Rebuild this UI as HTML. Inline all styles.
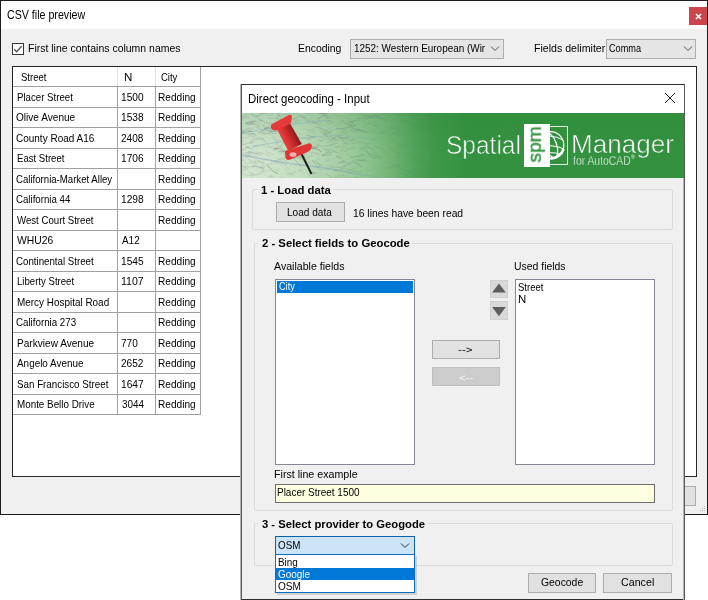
<!DOCTYPE html>
<html><head><meta charset="utf-8">
<style>
*{margin:0;padding:0;box-sizing:border-box}
html,body{width:708px;height:600px;overflow:hidden;background:#fff}
body{position:relative;font-family:"Liberation Sans",sans-serif;color:#000}
.a{position:absolute;white-space:pre;transform-origin:0 0}
.hl{position:absolute;height:1px;background:#a0a0a0}
.vl{position:absolute;width:1px;background:#a0a0a0}
.combo{position:absolute;background:#e5e5e5;border:1px solid #adadad}
.gb{position:absolute;border:1px solid #dcdcdc;border-radius:2px}
.btn{position:absolute;background:#e1e1e1;border:1px solid #adadad}
.lb{position:absolute;background:#fff;border:1px solid #828790}
</style></head><body>
<div class="a" style="left:0;top:0;width:708px;height:515px;border:1px solid #1c1c1c;background:#f0f0f0"></div>
<div class="a" style="left:1px;top:1px;width:706px;height:28px;background:#fff"></div>
<div class="a" style="left:7.27px;top:7.80px;font-size:12.46px;line-height:15px;transform:scaleX(0.855)">CSV file preview</div>
<div class="a" style="left:689px;top:7px;width:18px;height:18px;background:#cc444c"></div>
<svg class="a" style="left:689px;top:7px" width="18" height="18"><path d="M7 7L12 12M12 7L7 12" stroke="#fff" stroke-width="1.7"/></svg>
<div class="a" style="left:12px;top:43px;width:12px;height:12px;border:1px solid #333;background:#fff"></div>
<svg class="a" style="left:12px;top:43px" width="12" height="12"><path d="M2.3 6.3L4.6 8.7L9.6 3.3" fill="none" stroke="#555" stroke-width="1.3"/></svg>
<div class="a" style="left:27.86px;top:41.00px;font-size:11.30px;line-height:14px;transform:scaleX(0.927)">First line contains column names</div>
<div class="a" style="left:297.97px;top:41.00px;font-size:11.30px;line-height:14px;transform:scaleX(0.921)">Encoding</div>
<div class="combo" style="left:350px;top:39px;width:154px;height:20px"></div>
<div class="a" style="left:353.50px;top:41.00px;font-size:11.30px;line-height:14px;transform:scaleX(0.879)">1252: Western European (Wir</div>
<svg class="a" style="left:490px;top:45px" width="10" height="7"><path d="M1 1.5L5 5.5L9 1.5" fill="none" stroke="#555" stroke-width="1"/></svg>
<div class="a" style="left:533.65px;top:41.00px;font-size:11.30px;line-height:14px;transform:scaleX(0.938)">Fields delimiter</div>
<div class="combo" style="left:606px;top:39px;width:90px;height:20px"></div>
<div class="a" style="left:609.44px;top:41.00px;font-size:11.30px;line-height:14px;transform:scaleX(0.809)">Comma</div>
<svg class="a" style="left:683px;top:45px" width="10" height="7"><path d="M1 1.5L5 5.5L9 1.5" fill="none" stroke="#555" stroke-width="1"/></svg>
<div class="a" style="left:12px;top:66px;width:685px;height:411px;border:1px solid #262626;background:#fff"></div>
<div class="vl" style="left:117px;top:67px;height:20px;background:#e3e3e3"></div>
<div class="vl" style="left:155px;top:67px;height:20px;background:#e3e3e3"></div>
<div class="hl" style="left:13px;top:86px;width:188px"></div>
<div class="hl" style="left:13px;top:107px;width:188px"></div>
<div class="hl" style="left:13px;top:127px;width:188px"></div>
<div class="hl" style="left:13px;top:148px;width:188px"></div>
<div class="hl" style="left:13px;top:168px;width:188px"></div>
<div class="hl" style="left:13px;top:189px;width:188px"></div>
<div class="hl" style="left:13px;top:209px;width:188px"></div>
<div class="hl" style="left:13px;top:230px;width:188px"></div>
<div class="hl" style="left:13px;top:250px;width:188px"></div>
<div class="hl" style="left:13px;top:271px;width:188px"></div>
<div class="hl" style="left:13px;top:291px;width:188px"></div>
<div class="hl" style="left:13px;top:312px;width:188px"></div>
<div class="hl" style="left:13px;top:332px;width:188px"></div>
<div class="hl" style="left:13px;top:353px;width:188px"></div>
<div class="hl" style="left:13px;top:373px;width:188px"></div>
<div class="hl" style="left:13px;top:394px;width:188px"></div>
<div class="hl" style="left:13px;top:414px;width:188px"></div>
<div class="vl" style="left:117px;top:86px;height:329px"></div>
<div class="vl" style="left:155px;top:86px;height:329px"></div>
<div class="vl" style="left:200px;top:67px;height:348px"></div>
<div class="a" style="left:21.12px;top:69.80px;font-size:11.30px;line-height:14px;transform:scaleX(0.844)">Street</div>
<div class="a" style="left:124.37px;top:69.80px;font-size:11.30px;line-height:14px;transform:scaleX(1.024)">N</div>
<div class="a" style="left:161.12px;top:69.80px;font-size:11.30px;line-height:14px;transform:scaleX(0.841)">City</div>
<div class="a" style="left:16.63px;top:89.60px;font-size:11.30px;line-height:14px;transform:scaleX(0.856)">Placer Street</div>
<div class="a" style="left:121.09px;top:89.60px;font-size:11.30px;line-height:14px;transform:scaleX(0.898)">1500</div>
<div class="a" style="left:157.89px;top:89.60px;font-size:11.30px;line-height:14px;transform:scaleX(0.895)">Redding</div>
<div class="a" style="left:16.30px;top:110.10px;font-size:11.30px;line-height:14px;transform:scaleX(0.892)">Olive Avenue</div>
<div class="a" style="left:121.09px;top:110.10px;font-size:11.30px;line-height:14px;transform:scaleX(0.898)">1538</div>
<div class="a" style="left:157.89px;top:110.10px;font-size:11.30px;line-height:14px;transform:scaleX(0.895)">Redding</div>
<div class="a" style="left:16.20px;top:130.60px;font-size:11.30px;line-height:14px;transform:scaleX(0.884)">County Road A16</div>
<div class="a" style="left:121.30px;top:130.60px;font-size:11.30px;line-height:14px;transform:scaleX(0.889)">2408</div>
<div class="a" style="left:157.89px;top:130.60px;font-size:11.30px;line-height:14px;transform:scaleX(0.895)">Redding</div>
<div class="a" style="left:16.63px;top:151.10px;font-size:11.30px;line-height:14px;transform:scaleX(0.848)">East Street</div>
<div class="a" style="left:121.09px;top:151.10px;font-size:11.30px;line-height:14px;transform:scaleX(0.898)">1706</div>
<div class="a" style="left:157.89px;top:151.10px;font-size:11.30px;line-height:14px;transform:scaleX(0.895)">Redding</div>
<div class="a" style="left:16.22px;top:171.60px;font-size:11.30px;line-height:14px;transform:scaleX(0.851)">California-Market Alley</div>
<div class="a" style="left:157.89px;top:171.60px;font-size:11.30px;line-height:14px;transform:scaleX(0.895)">Redding</div>
<div class="a" style="left:16.22px;top:192.10px;font-size:11.30px;line-height:14px;transform:scaleX(0.856)">California 44</div>
<div class="a" style="left:121.09px;top:192.10px;font-size:11.30px;line-height:14px;transform:scaleX(0.898)">1298</div>
<div class="a" style="left:157.89px;top:192.10px;font-size:11.30px;line-height:14px;transform:scaleX(0.895)">Redding</div>
<div class="a" style="left:17.40px;top:212.60px;font-size:11.30px;line-height:14px;transform:scaleX(0.854)">West Court Street</div>
<div class="a" style="left:157.89px;top:212.60px;font-size:11.30px;line-height:14px;transform:scaleX(0.895)">Redding</div>
<div class="a" style="left:17.40px;top:233.10px;font-size:11.30px;line-height:14px;transform:scaleX(0.914)">WHU26</div>
<div class="a" style="left:121.80px;top:233.10px;font-size:11.30px;line-height:14px;transform:scaleX(0.878)">A12</div>
<div class="a" style="left:16.21px;top:253.60px;font-size:11.30px;line-height:14px;transform:scaleX(0.859)">Continental Street</div>
<div class="a" style="left:121.09px;top:253.60px;font-size:11.30px;line-height:14px;transform:scaleX(0.898)">1545</div>
<div class="a" style="left:157.89px;top:253.60px;font-size:11.30px;line-height:14px;transform:scaleX(0.895)">Redding</div>
<div class="a" style="left:16.63px;top:274.10px;font-size:11.30px;line-height:14px;transform:scaleX(0.850)">Liberty Street</div>
<div class="a" style="left:121.06px;top:274.10px;font-size:11.30px;line-height:14px;transform:scaleX(0.935)">1107</div>
<div class="a" style="left:157.89px;top:274.10px;font-size:11.30px;line-height:14px;transform:scaleX(0.895)">Redding</div>
<div class="a" style="left:16.60px;top:294.60px;font-size:11.30px;line-height:14px;transform:scaleX(0.879)">Mercy Hospital Road</div>
<div class="a" style="left:157.89px;top:294.60px;font-size:11.30px;line-height:14px;transform:scaleX(0.895)">Redding</div>
<div class="a" style="left:16.21px;top:315.10px;font-size:11.30px;line-height:14px;transform:scaleX(0.862)">California 273</div>
<div class="a" style="left:157.89px;top:315.10px;font-size:11.30px;line-height:14px;transform:scaleX(0.895)">Redding</div>
<div class="a" style="left:16.59px;top:335.60px;font-size:11.30px;line-height:14px;transform:scaleX(0.893)">Parkview Avenue</div>
<div class="a" style="left:121.30px;top:335.60px;font-size:11.30px;line-height:14px;transform:scaleX(0.889)">770</div>
<div class="a" style="left:157.89px;top:335.60px;font-size:11.30px;line-height:14px;transform:scaleX(0.895)">Redding</div>
<div class="a" style="left:17.00px;top:356.10px;font-size:11.30px;line-height:14px;transform:scaleX(0.878)">Angelo Avenue</div>
<div class="a" style="left:121.29px;top:356.10px;font-size:11.30px;line-height:14px;transform:scaleX(0.894)">2652</div>
<div class="a" style="left:157.89px;top:356.10px;font-size:11.30px;line-height:14px;transform:scaleX(0.895)">Redding</div>
<div class="a" style="left:16.61px;top:376.60px;font-size:11.30px;line-height:14px;transform:scaleX(0.866)">San Francisco Street</div>
<div class="a" style="left:121.09px;top:376.60px;font-size:11.30px;line-height:14px;transform:scaleX(0.902)">1647</div>
<div class="a" style="left:157.89px;top:376.60px;font-size:11.30px;line-height:14px;transform:scaleX(0.895)">Redding</div>
<div class="a" style="left:16.61px;top:397.10px;font-size:11.30px;line-height:14px;transform:scaleX(0.871)">Monte Bello Drive</div>
<div class="a" style="left:121.50px;top:397.10px;font-size:11.30px;line-height:14px;transform:scaleX(0.877)">3044</div>
<div class="a" style="left:157.89px;top:397.10px;font-size:11.30px;line-height:14px;transform:scaleX(0.895)">Redding</div>
<div class="btn" style="left:660px;top:486px;width:36px;height:20px"></div>
<div class="a" style="left:704px;top:506px;width:1px;height:1px;background:#b8b8b8"></div>
<div class="a" style="left:702px;top:508px;width:1px;height:1px;background:#b8b8b8"></div>
<div class="a" style="left:704px;top:508px;width:1px;height:1px;background:#b8b8b8"></div>
<div class="a" style="left:700px;top:510px;width:1px;height:1px;background:#b8b8b8"></div>
<div class="a" style="left:702px;top:510px;width:1px;height:1px;background:#b8b8b8"></div>
<div class="a" style="left:704px;top:510px;width:1px;height:1px;background:#b8b8b8"></div>
<div class="a" style="left:241px;top:84px;width:444px;height:516px;border:1px solid #2e2e2e;border-left-color:#5a5a5a;border-right-color:#5a5a5a;background:#f0f0f0;box-shadow:-1px 0 0 #b4b4b4, 0 0 0 0 #000"></div>
<div class="a" style="left:683px;top:85px;width:1px;height:515px;background:#b4b4b4"></div>
<div class="a" style="left:242px;top:85px;width:442px;height:28px;background:#fff"></div>
<div class="a" style="left:248.28px;top:92.10px;font-size:12.17px;line-height:15px;transform:scaleX(0.942)">Direct geocoding - Input</div>
<svg class="a" style="left:664px;top:92px" width="12" height="12"><path d="M1 1L11 11M11 1L1 11" stroke="#222" stroke-width="1"/></svg>
<div class="a" style="left:242px;top:113px;width:442px;height:65px;overflow:hidden;background:linear-gradient(90deg,#d3e6d0 0px,#cde2ca 30px,#c0dcbd 62px,#a8cfa6 95px,#8cc48e 125px,#70b474 150px,#52a45a 172px,#42994b 190px,#3a9745 205px,#33913f 225px,#33913f 442px)">
<div class="a" style="left:0;top:0;width:442px;height:65px;background:linear-gradient(180deg,rgba(40,130,55,0.18) 0%,rgba(40,130,55,0) 60%)"></div>
<svg class="a" style="left:0;top:0" width="442" height="65">
<defs>
<linearGradient id="fade" x1="0" x2="1" y1="0" y2="0"><stop offset="0" stop-color="#fff"/><stop offset="0.2" stop-color="#fff"/><stop offset="0.35" stop-color="#fff" stop-opacity="0.3"/><stop offset="0.47" stop-color="#fff" stop-opacity="0"/></linearGradient>
<mask id="mfade"><rect width="442" height="65" fill="url(#fade)"/></mask>
<linearGradient id="body" gradientUnits="userSpaceOnUse" x1="282" y1="140" x2="296" y2="133"><stop offset="0" stop-color="#e84444"/><stop offset="0.45" stop-color="#d22c2c"/><stop offset="1" stop-color="#8c1a1c"/></linearGradient>
</defs>
<filter id="soft"><feGaussianBlur stdDeviation="0.45"/></filter><filter id="turb" x="0" y="0" width="100%" height="100%"><feTurbulence type="fractalNoise" baseFrequency="0.12 0.25" numOctaves="2" seed="3"/><feColorMatrix type="matrix" values="0 0 0 0 0.25  0 0 0 0 0.35  0 0 0 0 0.28  0 0 0 2.2 -1.1"/></filter><g mask="url(#mfade)"><rect width="442" height="65" filter="url(#turb)" opacity="0.35"/></g><g mask="url(#mfade)" filter="url(#soft)"><path d="M71.0 50.0 L72.5 51.0 L75.7 53.7" stroke="#4f4a5a" stroke-opacity="0.13" stroke-width="0.9" fill="none"/>
<path d="M94.5 43.2 L96.1 44.2 L99.5 44.9" stroke="#3f4a45" stroke-opacity="0.26" stroke-width="0.9" fill="none"/>
<path d="M2.4 44.7 L4.3 44.5 L6.4 43.2 L8.4 42.8" stroke="#666666" stroke-opacity="0.26" stroke-width="0.7" fill="none"/>
<path d="M83.1 23.0 L86.1 23.2 L89.9 23.6" stroke="#5e7f9a" stroke-opacity="0.26" stroke-width="0.9" fill="none"/>
<path d="M80.4 42.7 L82.5 41.5 L84.7 40.2 L87.4 38.4" stroke="#3f4a45" stroke-opacity="0.15" stroke-width="0.9" fill="none"/>
<path d="M31.2 36.2 L34.7 35.4 L37.9 35.6 L40.0 36.9 L42.3 39.2 L44.2 41.3" stroke="#3f4a45" stroke-opacity="0.35" stroke-width="0.9" fill="none"/>
<path d="M164.3 57.4 L168.4 59.1 L170.0 60.8 L172.8 62.9 L175.7 63.2" stroke="#4f4a5a" stroke-opacity="0.27" stroke-width="0.9" fill="none"/>
<path d="M4.7 9.9 L8.9 9.2 L10.9 8.9 L13.1 8.2" stroke="#4f4a5a" stroke-opacity="0.32" stroke-width="0.8" fill="none"/>
<path d="M166.6 -2.3 L168.0 -0.9 L170.1 -0.1 L173.0 0.0 L175.3 0.4 L177.8 -0.8" stroke="#56665c" stroke-opacity="0.27" stroke-width="0.8" fill="none"/>
<path d="M228.3 14.4 L232.4 14.8 L235.3 16.8" stroke="#666666" stroke-opacity="0.21" stroke-width="0.9" fill="none"/>
<path d="M88.5 27.1 L90.5 26.2 L92.5 24.8 L93.8 23.9" stroke="#4f4a5a" stroke-opacity="0.25" stroke-width="0.8" fill="none"/>
<path d="M143.4 56.9 L145.5 55.9 L147.6 54.5 L151.0 52.2 L153.9 52.2 L155.6 52.1" stroke="#3f4a45" stroke-opacity="0.30" stroke-width="0.8" fill="none"/>
<path d="M109.7 14.3 L112.1 16.3 L115.1 17.0 L118.0 16.1" stroke="#3f4a45" stroke-opacity="0.29" stroke-width="0.8" fill="none"/>
<path d="M119.6 2.0 L123.4 2.4 L125.6 2.2 L129.9 3.4" stroke="#4f4a5a" stroke-opacity="0.31" stroke-width="0.9" fill="none"/>
<path d="M175.0 44.3 L179.1 46.0 L181.2 48.0 L184.2 49.3 L188.1 50.1" stroke="#56665c" stroke-opacity="0.35" stroke-width="0.8" fill="none"/>
<path d="M10.1 54.0 L13.4 53.2 L17.3 54.2 L20.7 54.9 L22.2 55.8" stroke="#3f4a45" stroke-opacity="0.34" stroke-width="0.7" fill="none"/>
<path d="M109.5 47.9 L113.7 46.8 L116.6 46.9 L118.3 47.5 L122.7 47.0" stroke="#3f4a45" stroke-opacity="0.16" stroke-width="0.9" fill="none"/>
<path d="M191.6 50.4 L193.9 51.5 L195.6 52.5 L200.0 52.2 L203.0 52.5 L205.3 54.2" stroke="#4f4a5a" stroke-opacity="0.32" stroke-width="0.7" fill="none"/>
<path d="M-3.0 45.3 L-0.3 44.8 L3.2 42.4 L5.6 40.8 L9.3 38.8" stroke="#5e7f9a" stroke-opacity="0.32" stroke-width="0.7" fill="none"/>
<path d="M123.0 24.5 L126.2 25.3 L127.8 26.3 L131.1 26.8 L132.8 26.3 L135.8 26.0" stroke="#5e7f9a" stroke-opacity="0.31" stroke-width="0.6" fill="none"/>
<path d="M210.8 58.1 L213.7 59.1 L217.2 60.5" stroke="#3f4a45" stroke-opacity="0.23" stroke-width="0.7" fill="none"/>
<path d="M163.2 29.0 L165.4 29.3 L169.5 30.0 L172.8 32.7 L174.1 34.4 L175.9 36.4" stroke="#5e7f9a" stroke-opacity="0.23" stroke-width="0.6" fill="none"/>
<path d="M157.8 30.5 L161.7 31.9 L165.4 31.6 L167.3 31.8 L171.0 34.2" stroke="#4f4a5a" stroke-opacity="0.30" stroke-width="0.6" fill="none"/>
<path d="M89.6 26.7 L92.4 26.6 L94.9 26.5 L97.1 25.5" stroke="#56665c" stroke-opacity="0.12" stroke-width="0.9" fill="none"/>
<path d="M100.1 62.3 L101.8 62.4 L104.9 64.7 L106.0 66.1 L107.3 67.1" stroke="#4f4a5a" stroke-opacity="0.18" stroke-width="0.7" fill="none"/>
<path d="M194.9 5.3 L198.0 5.6 L201.0 5.9 L203.3 5.7 L205.3 6.2" stroke="#3f4a45" stroke-opacity="0.18" stroke-width="0.6" fill="none"/>
<path d="M148.6 8.0 L152.0 5.8 L154.1 4.4 L157.8 2.2" stroke="#56665c" stroke-opacity="0.27" stroke-width="0.6" fill="none"/>
<path d="M121.7 43.4 L123.7 42.7 L127.0 43.3 L129.1 43.8" stroke="#5e7f9a" stroke-opacity="0.24" stroke-width="0.7" fill="none"/>
<path d="M57.6 7.9 L61.2 7.1 L63.3 6.7" stroke="#5e7f9a" stroke-opacity="0.18" stroke-width="0.9" fill="none"/>
<path d="M16.6 7.0 L20.7 7.7 L22.5 9.3 L24.6 10.0 L28.7 10.1 L30.5 10.6" stroke="#56665c" stroke-opacity="0.36" stroke-width="0.7" fill="none"/>
<path d="M-6.4 18.3 L-4.7 18.1 L-0.8 19.3 L1.3 20.5 L3.6 20.9 L5.6 21.2" stroke="#5e7f9a" stroke-opacity="0.12" stroke-width="0.8" fill="none"/>
<path d="M230.4 -1.5 L234.2 -3.2 L235.9 -4.3 L237.4 -5.3" stroke="#56665c" stroke-opacity="0.24" stroke-width="0.7" fill="none"/>
<path d="M52.0 9.5 L54.9 7.9 L56.9 6.6" stroke="#4f4a5a" stroke-opacity="0.14" stroke-width="0.7" fill="none"/>
<path d="M154.4 12.9 L157.4 15.1 L159.3 16.4 L160.7 17.7 L163.0 20.6 L164.7 22.7" stroke="#666666" stroke-opacity="0.15" stroke-width="0.6" fill="none"/>
<path d="M196.6 20.8 L198.2 20.5 L202.6 20.3 L205.4 19.8" stroke="#3f4a45" stroke-opacity="0.27" stroke-width="0.7" fill="none"/>
<path d="M112.3 64.3 L113.9 65.0 L115.5 66.5" stroke="#3f4a45" stroke-opacity="0.32" stroke-width="0.7" fill="none"/>
<path d="M172.3 45.8 L174.9 46.4 L178.4 47.1 L181.3 48.8 L182.6 49.9 L184.8 50.5" stroke="#56665c" stroke-opacity="0.27" stroke-width="0.7" fill="none"/>
<path d="M-6.9 57.8 L-3.5 58.7 L-0.4 58.7" stroke="#5e7f9a" stroke-opacity="0.23" stroke-width="0.6" fill="none"/>
<path d="M238.3 22.9 L239.6 23.7 L243.1 25.7" stroke="#5e7f9a" stroke-opacity="0.36" stroke-width="0.9" fill="none"/>
<path d="M42.5 -0.0 L45.2 -1.3 L47.1 -1.1" stroke="#666666" stroke-opacity="0.19" stroke-width="0.6" fill="none"/>
<path d="M165.8 43.9 L167.8 44.3 L170.5 46.6 L173.5 48.7 L175.8 49.9 L178.3 50.1" stroke="#56665c" stroke-opacity="0.30" stroke-width="0.9" fill="none"/>
<path d="M20.0 1.0 L21.7 0.9 L25.7 0.1 L29.3 -2.4 L33.1 -3.5" stroke="#56665c" stroke-opacity="0.14" stroke-width="0.8" fill="none"/>
<path d="M148.7 50.2 L150.7 50.9 L155.0 51.7 L158.1 54.2 L161.0 57.2 L162.9 59.7" stroke="#3f4a45" stroke-opacity="0.13" stroke-width="0.9" fill="none"/>
<path d="M102.7 10.8 L106.9 11.6 L108.8 12.0 L111.2 12.3 L114.8 11.7" stroke="#56665c" stroke-opacity="0.22" stroke-width="0.7" fill="none"/>
<path d="M65.2 22.4 L66.9 22.8 L70.7 23.8 L73.4 24.7" stroke="#56665c" stroke-opacity="0.36" stroke-width="0.9" fill="none"/>
<path d="M96.9 23.0 L98.6 22.7 L100.6 21.6 L104.4 19.9" stroke="#5e7f9a" stroke-opacity="0.21" stroke-width="0.7" fill="none"/>
<path d="M84.2 36.4 L86.8 36.5 L89.8 37.2 L93.2 39.5 L97.3 39.9" stroke="#5e7f9a" stroke-opacity="0.22" stroke-width="0.9" fill="none"/>
<path d="M98.0 38.2 L100.7 37.7 L104.6 38.2" stroke="#666666" stroke-opacity="0.24" stroke-width="0.6" fill="none"/>
<path d="M87.9 1.0 L89.4 2.7 L91.2 3.4 L94.5 4.8 L96.8 7.6 L99.1 10.6" stroke="#5e7f9a" stroke-opacity="0.14" stroke-width="0.6" fill="none"/>
<path d="M-9.7 52.1 L-7.4 52.8 L-5.1 52.6" stroke="#5e7f9a" stroke-opacity="0.29" stroke-width="0.6" fill="none"/>
<path d="M14.9 39.0 L17.0 39.4 L18.5 39.9 L21.3 40.1" stroke="#56665c" stroke-opacity="0.27" stroke-width="0.7" fill="none"/>
<path d="M108.8 43.7 L111.2 44.3 L114.0 43.3 L116.8 43.1 L120.0 41.7 L122.2 41.9" stroke="#3f4a45" stroke-opacity="0.29" stroke-width="0.9" fill="none"/>
<path d="M80.6 32.6 L83.5 33.1 L87.9 32.4 L91.6 30.9 L93.3 29.7" stroke="#56665c" stroke-opacity="0.15" stroke-width="0.9" fill="none"/>
<path d="M142.5 2.7 L144.1 3.9 L145.9 5.0" stroke="#666666" stroke-opacity="0.15" stroke-width="0.6" fill="none"/>
<path d="M167.5 47.4 L171.6 49.1 L173.2 51.1 L176.9 53.2 L178.0 54.4" stroke="#5e7f9a" stroke-opacity="0.32" stroke-width="0.8" fill="none"/>
<path d="M100.6 53.5 L104.8 52.4 L108.5 49.9" stroke="#4f4a5a" stroke-opacity="0.21" stroke-width="0.8" fill="none"/>
<path d="M195.5 30.2 L198.3 28.9 L200.5 27.7 L203.3 27.0 L205.6 26.9 L208.3 27.1" stroke="#5e7f9a" stroke-opacity="0.13" stroke-width="0.6" fill="none"/>
<path d="M190.8 57.6 L193.1 58.8 L197.4 59.6" stroke="#666666" stroke-opacity="0.13" stroke-width="0.8" fill="none"/>
<path d="M221.1 39.2 L223.1 38.5 L227.2 36.9" stroke="#5e7f9a" stroke-opacity="0.31" stroke-width="0.9" fill="none"/>
<path d="M193.7 51.5 L197.0 53.2 L199.4 56.1" stroke="#666666" stroke-opacity="0.18" stroke-width="0.8" fill="none"/>
<path d="M105.2 9.0 L107.2 9.1 L110.6 8.9 L113.7 8.6" stroke="#4f4a5a" stroke-opacity="0.36" stroke-width="0.6" fill="none"/>
<path d="M237.0 41.5 L241.4 40.8 L243.2 41.6" stroke="#4f4a5a" stroke-opacity="0.22" stroke-width="0.7" fill="none"/>
<path d="M177.0 5.5 L179.0 6.7 L181.3 7.3" stroke="#56665c" stroke-opacity="0.30" stroke-width="0.7" fill="none"/>
<path d="M99.8 47.3 L102.7 48.8 L105.3 49.5 L107.3 51.7 L110.7 53.7" stroke="#5e7f9a" stroke-opacity="0.36" stroke-width="0.6" fill="none"/>
<path d="M-8.9 3.5 L-7.5 4.2 L-5.7 4.7 L-1.3 4.2 L3.0 4.1 L7.1 3.4" stroke="#5e7f9a" stroke-opacity="0.26" stroke-width="0.6" fill="none"/>
<path d="M16.4 20.0 L18.8 19.1 L22.5 16.6 L25.6 14.5" stroke="#4f4a5a" stroke-opacity="0.32" stroke-width="0.8" fill="none"/>
<path d="M92.2 34.2 L96.1 33.5 L97.8 33.3" stroke="#3f4a45" stroke-opacity="0.31" stroke-width="0.7" fill="none"/>
<path d="M149.8 55.0 L152.1 54.7 L156.2 53.1 L158.9 51.3 L161.1 49.8" stroke="#56665c" stroke-opacity="0.27" stroke-width="0.9" fill="none"/>
<path d="M172.0 46.0 L175.9 45.2 L179.9 44.0 L181.7 43.3" stroke="#3f4a45" stroke-opacity="0.13" stroke-width="0.7" fill="none"/>
<path d="M150.2 2.0 L152.1 2.4 L154.1 2.5 L155.7 1.9 L159.0 0.1" stroke="#4f4a5a" stroke-opacity="0.19" stroke-width="0.6" fill="none"/>
<path d="M233.9 27.0 L236.9 25.1 L240.9 23.6 L244.9 22.9 L248.2 22.8 L250.9 21.7" stroke="#666666" stroke-opacity="0.17" stroke-width="0.9" fill="none"/>
<path d="M224.6 49.6 L228.2 48.7 L229.8 49.1 L233.4 50.2" stroke="#3f4a45" stroke-opacity="0.28" stroke-width="0.8" fill="none"/>
<path d="M19.4 19.8 L21.7 20.6 L24.4 20.7 L27.4 20.3 L28.7 19.5" stroke="#5e7f9a" stroke-opacity="0.23" stroke-width="0.9" fill="none"/>
<path d="M180.9 9.3 L183.3 10.5 L185.9 10.4 L189.7 9.6" stroke="#666666" stroke-opacity="0.24" stroke-width="0.6" fill="none"/>
<path d="M0.2 51.7 L2.6 53.5 L5.6 53.9 L9.9 53.7 L13.6 51.9" stroke="#666666" stroke-opacity="0.30" stroke-width="0.6" fill="none"/>
<path d="M38.4 -2.0 L41.9 -0.8 L45.9 -0.7 L48.1 -0.4" stroke="#56665c" stroke-opacity="0.34" stroke-width="0.8" fill="none"/>
<path d="M216.3 28.7 L218.4 27.9 L220.8 27.1 L222.4 26.0 L226.0 23.6 L229.9 22.0" stroke="#4f4a5a" stroke-opacity="0.31" stroke-width="0.8" fill="none"/>
<path d="M18.8 24.0 L20.9 26.0 L23.4 28.5 L24.8 30.2 L27.4 33.4" stroke="#56665c" stroke-opacity="0.18" stroke-width="0.8" fill="none"/>
<path d="M134.3 35.0 L137.7 34.7 L139.8 35.8 L142.0 36.9 L144.5 40.1 L147.1 43.4" stroke="#3f4a45" stroke-opacity="0.30" stroke-width="0.7" fill="none"/>
<path d="M27.3 18.8 L28.9 19.9 L32.3 20.7 L33.7 20.2 L35.3 19.3" stroke="#56665c" stroke-opacity="0.25" stroke-width="0.9" fill="none"/>
<path d="M135.9 20.5 L137.3 19.8 L140.9 19.6 L142.6 19.4 L145.6 17.6 L148.8 15.4" stroke="#3f4a45" stroke-opacity="0.13" stroke-width="0.8" fill="none"/>
<path d="M138.7 21.1 L142.9 20.6 L145.4 18.8 L147.2 17.6 L150.4 15.4 L153.0 13.6" stroke="#4f4a5a" stroke-opacity="0.15" stroke-width="0.7" fill="none"/>
<path d="M119.6 17.3 L121.3 18.3 L123.5 19.1 L127.6 18.3 L131.2 18.8 L134.9 17.0" stroke="#5e7f9a" stroke-opacity="0.14" stroke-width="0.9" fill="none"/>
<path d="M33.8 -2.8 L37.6 -4.6 L42.0 -4.2" stroke="#56665c" stroke-opacity="0.29" stroke-width="0.8" fill="none"/>
<path d="M149.0 15.1 L153.2 14.9 L154.8 15.7 L156.7 16.5 L159.2 19.7" stroke="#4f4a5a" stroke-opacity="0.35" stroke-width="0.8" fill="none"/>
<path d="M38.0 33.1 L40.7 35.1 L42.9 37.9 L44.7 40.1 L46.9 43.0 L48.7 45.2" stroke="#4f4a5a" stroke-opacity="0.26" stroke-width="0.8" fill="none"/>
<path d="M187.3 32.9 L188.8 32.5 L192.4 30.1 L194.0 29.0" stroke="#3f4a45" stroke-opacity="0.13" stroke-width="0.7" fill="none"/>
<path d="M163.2 17.8 L166.3 16.8 L169.8 15.0" stroke="#666666" stroke-opacity="0.33" stroke-width="0.6" fill="none"/>
<path d="M209.9 10.6 L212.0 10.1 L213.3 9.2 L217.2 8.5 L221.1 8.4 L223.5 8.7" stroke="#3f4a45" stroke-opacity="0.15" stroke-width="0.7" fill="none"/>
<path d="M63.6 36.5 L65.9 35.9 L68.5 35.9 L72.8 34.9 L76.7 34.0" stroke="#666666" stroke-opacity="0.30" stroke-width="0.9" fill="none"/>
<path d="M-2.2 24.8 L0.9 25.4 L4.9 24.8 L8.2 22.5 L9.4 21.7 L12.5 19.5" stroke="#3f4a45" stroke-opacity="0.12" stroke-width="0.9" fill="none"/>
<path d="M13.9 14.2 L18.0 15.8 L21.0 17.1 L24.9 17.0 L26.8 18.1 L31.1 18.6" stroke="#3f4a45" stroke-opacity="0.24" stroke-width="0.6" fill="none"/>
<path d="M147.0 35.3 L150.2 37.2 L153.3 38.7 L155.5 39.5 L158.6 40.1 L163.0 39.3" stroke="#4f4a5a" stroke-opacity="0.35" stroke-width="0.7" fill="none"/>
<path d="M122.9 10.7 L125.4 10.9 L129.1 9.5" stroke="#666666" stroke-opacity="0.30" stroke-width="0.7" fill="none"/>
<path d="M105.8 14.5 L108.4 13.3 L110.6 13.4 L112.9 12.6" stroke="#666666" stroke-opacity="0.16" stroke-width="0.7" fill="none"/>
<path d="M233.7 12.5 L236.1 12.0 L239.8 9.5 L241.5 8.9 L243.2 9.3" stroke="#5e7f9a" stroke-opacity="0.16" stroke-width="0.7" fill="none"/>
<path d="M188.7 11.9 L192.7 10.4 L196.1 8.1 L197.4 7.2" stroke="#5e7f9a" stroke-opacity="0.29" stroke-width="0.8" fill="none"/>
<path d="M105.8 50.7 L107.9 49.8 L111.5 49.8 L114.9 50.2 L117.9 52.0 L121.1 54.6" stroke="#666666" stroke-opacity="0.32" stroke-width="0.7" fill="none"/>
<path d="M150.4 28.9 L152.3 29.9 L155.7 31.3" stroke="#4f4a5a" stroke-opacity="0.18" stroke-width="0.9" fill="none"/>
<path d="M110.7 62.1 L112.5 63.8 L116.4 64.5 L117.9 65.6" stroke="#56665c" stroke-opacity="0.25" stroke-width="0.7" fill="none"/>
<path d="M169.1 -0.3 L171.9 -1.9 L175.2 -3.4 L178.3 -4.8 L181.4 -4.9" stroke="#5e7f9a" stroke-opacity="0.30" stroke-width="0.9" fill="none"/>
<path d="M42.5 14.8 L45.7 15.9 L47.6 17.1" stroke="#5e7f9a" stroke-opacity="0.22" stroke-width="0.6" fill="none"/>
<path d="M8.8 1.6 L10.6 2.1 L13.3 2.3 L16.9 4.7 L19.7 8.1" stroke="#5e7f9a" stroke-opacity="0.17" stroke-width="0.7" fill="none"/>
<path d="M222.4 57.0 L225.5 57.7 L229.8 57.2 L233.1 56.3" stroke="#5e7f9a" stroke-opacity="0.23" stroke-width="0.8" fill="none"/>
<path d="M180.0 16.8 L184.0 17.2 L186.6 16.6 L189.0 15.3 L190.3 14.4 L192.5 13.7" stroke="#4f4a5a" stroke-opacity="0.28" stroke-width="0.8" fill="none"/>
<path d="M109.9 30.5 L112.2 29.9 L113.9 29.3 L116.2 28.6 L119.2 29.3" stroke="#56665c" stroke-opacity="0.27" stroke-width="0.6" fill="none"/>
<path d="M154.3 45.5 L156.0 44.9 L157.8 43.6 L160.3 42.9 L163.8 40.6" stroke="#666666" stroke-opacity="0.16" stroke-width="0.6" fill="none"/>
<path d="M157.1 2.8 L160.7 2.4 L164.4 2.2 L168.5 1.6 L170.8 1.4" stroke="#4f4a5a" stroke-opacity="0.32" stroke-width="0.9" fill="none"/>
<path d="M113.3 58.0 L115.4 58.8 L118.7 58.6 L120.6 59.0" stroke="#56665c" stroke-opacity="0.23" stroke-width="0.9" fill="none"/>
<path d="M156.3 5.8 L159.1 8.0 L161.6 8.7 L163.0 9.4 L166.7 9.1 L170.1 11.1" stroke="#3f4a45" stroke-opacity="0.24" stroke-width="0.9" fill="none"/>
<path d="M179.3 50.5 L181.8 50.9 L184.0 52.3 L186.6 53.9 L187.9 55.6 L189.9 57.5" stroke="#666666" stroke-opacity="0.13" stroke-width="0.8" fill="none"/>
<path d="M63.2 6.5 L65.4 7.8 L68.3 8.3 L70.3 7.8 L72.2 7.7" stroke="#3f4a45" stroke-opacity="0.31" stroke-width="0.6" fill="none"/>
<path d="M89.7 22.6 L91.5 22.5 L94.9 20.3" stroke="#5e7f9a" stroke-opacity="0.27" stroke-width="0.6" fill="none"/>
<path d="M187.3 2.0 L190.7 3.1 L193.9 4.6 L197.3 5.0" stroke="#5e7f9a" stroke-opacity="0.27" stroke-width="0.7" fill="none"/>
<path d="M15.3 47.7 L18.5 49.0 L22.4 50.1" stroke="#56665c" stroke-opacity="0.25" stroke-width="0.8" fill="none"/>
<path d="M205.6 47.4 L209.0 46.8 L210.6 47.4" stroke="#666666" stroke-opacity="0.25" stroke-width="0.6" fill="none"/>
<path d="M183.4 31.0 L185.0 31.2 L188.2 31.2 L192.1 33.5 L194.4 34.8 L197.9 35.0" stroke="#4f4a5a" stroke-opacity="0.33" stroke-width="0.6" fill="none"/>
<path d="M96.7 63.4 L98.6 63.1 L100.9 62.7" stroke="#666666" stroke-opacity="0.18" stroke-width="0.7" fill="none"/>
<path d="M220.7 34.6 L222.2 35.4 L225.1 37.7 L228.6 40.2" stroke="#56665c" stroke-opacity="0.34" stroke-width="0.6" fill="none"/>
<path d="M169.3 63.1 L171.7 62.6 L176.0 62.1" stroke="#5e7f9a" stroke-opacity="0.27" stroke-width="0.8" fill="none"/>
<path d="M81.9 21.3 L85.6 20.1 L88.6 18.4 L91.2 17.5" stroke="#5e7f9a" stroke-opacity="0.31" stroke-width="0.9" fill="none"/>
<path d="M226.2 9.0 L229.6 8.6 L233.5 8.9 L237.5 9.7 L238.9 10.4" stroke="#4f4a5a" stroke-opacity="0.26" stroke-width="0.8" fill="none"/>
<path d="M136.2 -1.7 L139.4 -1.0 L142.4 1.6 L143.7 2.3 L146.5 2.7 L150.3 3.7" stroke="#3f4a45" stroke-opacity="0.19" stroke-width="0.7" fill="none"/>
<path d="M192.9 4.3 L195.8 6.9 L198.6 9.6 L200.7 11.8 L202.7 14.0" stroke="#5e7f9a" stroke-opacity="0.17" stroke-width="0.7" fill="none"/>
<path d="M67.4 58.1 L70.1 59.9 L72.7 59.9 L75.8 60.0" stroke="#56665c" stroke-opacity="0.31" stroke-width="0.7" fill="none"/>
<path d="M89.5 24.6 L92.8 24.6 L94.7 23.8 L97.7 21.8 L100.3 20.0" stroke="#5e7f9a" stroke-opacity="0.31" stroke-width="0.7" fill="none"/>
<path d="M51.6 1.2 L54.5 1.2 L56.6 -0.1" stroke="#3f4a45" stroke-opacity="0.20" stroke-width="0.6" fill="none"/>
<path d="M13.5 45.9 L15.5 46.7 L17.0 48.5 L19.5 49.7 L22.4 51.4 L26.4 51.7" stroke="#56665c" stroke-opacity="0.17" stroke-width="0.7" fill="none"/>
<path d="M84.6 61.2 L87.2 62.2 L89.9 65.5 L92.9 66.7 L94.7 67.1" stroke="#3f4a45" stroke-opacity="0.18" stroke-width="0.7" fill="none"/>
<path d="M150.2 -0.6 L154.1 -1.3 L156.2 -2.1 L158.2 -2.2 L162.1 -0.3 L165.3 -0.5" stroke="#3f4a45" stroke-opacity="0.32" stroke-width="0.6" fill="none"/>
<path d="M54.5 25.1 L56.3 24.5 L60.6 24.6 L63.0 25.1 L66.6 26.3 L69.0 25.9" stroke="#56665c" stroke-opacity="0.21" stroke-width="0.8" fill="none"/>
<path d="M110.3 48.6 L114.0 50.7 L117.8 52.6 L119.1 54.0" stroke="#4f4a5a" stroke-opacity="0.14" stroke-width="0.8" fill="none"/>
<path d="M212.2 50.9 L214.3 52.4 L216.1 52.5" stroke="#56665c" stroke-opacity="0.20" stroke-width="0.7" fill="none"/>
<path d="M109.4 18.1 L111.4 18.6 L115.5 19.4 L117.4 19.6" stroke="#5e7f9a" stroke-opacity="0.22" stroke-width="0.7" fill="none"/>
<path d="M-3.6 21.6 L-1.9 21.1 L0.9 20.2 L3.4 18.5" stroke="#4f4a5a" stroke-opacity="0.25" stroke-width="0.8" fill="none"/>
<path d="M19.8 10.7 L22.6 14.2 L23.7 15.6 L27.0 18.2 L30.7 18.6 L35.1 18.0" stroke="#3f4a45" stroke-opacity="0.23" stroke-width="0.8" fill="none"/>
<path d="M117.7 29.5 L120.5 29.2 L122.5 30.0 L124.2 30.8 L128.0 31.1" stroke="#4f4a5a" stroke-opacity="0.17" stroke-width="0.6" fill="none"/>
<path d="M197.2 3.1 L199.1 2.8 L202.5 2.9 L204.8 2.2 L207.8 0.1" stroke="#666666" stroke-opacity="0.22" stroke-width="0.6" fill="none"/>
<path d="M119.6 35.8 L122.1 34.6 L123.9 34.3 L126.2 34.4 L130.6 35.0 L133.9 33.5" stroke="#666666" stroke-opacity="0.26" stroke-width="0.6" fill="none"/>
<path d="M79.0 0.7 L82.7 0.3 L86.6 1.3" stroke="#56665c" stroke-opacity="0.31" stroke-width="0.9" fill="none"/>
<path d="M134.1 2.6 L136.6 4.2 L139.1 6.0" stroke="#666666" stroke-opacity="0.15" stroke-width="0.7" fill="none"/>
<path d="M231.9 44.5 L234.9 43.7 L236.4 44.2" stroke="#4f4a5a" stroke-opacity="0.18" stroke-width="0.9" fill="none"/>
<path d="M120.7 13.7 L122.3 14.1 L125.2 13.3" stroke="#666666" stroke-opacity="0.30" stroke-width="0.6" fill="none"/>
<path d="M20.5 32.0 L22.3 32.7 L25.6 34.4 L29.6 34.8" stroke="#5e7f9a" stroke-opacity="0.29" stroke-width="0.6" fill="none"/>
<path d="M88.9 0.2 L92.9 0.7 L96.6 2.3 L100.6 4.3 L103.2 4.9" stroke="#666666" stroke-opacity="0.13" stroke-width="0.7" fill="none"/>
<path d="M229.5 0.6 L231.0 0.9 L233.0 0.4 L234.8 -0.6 L236.9 -1.2 L239.4 -2.1" stroke="#5e7f9a" stroke-opacity="0.27" stroke-width="0.6" fill="none"/>
<path d="M-1.4 17.3 L2.5 18.0 L4.1 17.3 L5.4 16.5 L6.7 15.5" stroke="#3f4a45" stroke-opacity="0.19" stroke-width="0.7" fill="none"/>
<path d="M20.1 20.2 L23.3 19.6 L26.0 20.6 L29.9 22.1 L32.0 24.5" stroke="#56665c" stroke-opacity="0.18" stroke-width="0.6" fill="none"/>
<path d="M175.1 39.9 L177.1 40.5 L179.6 42.0 L182.4 43.9" stroke="#5e7f9a" stroke-opacity="0.32" stroke-width="0.6" fill="none"/>
<path d="M50.6 44.6 L52.6 46.4 L53.9 47.9 L55.4 49.8 L57.2 51.3 L58.5 53.0" stroke="#3f4a45" stroke-opacity="0.31" stroke-width="0.7" fill="none"/>
<path d="M127.8 19.5 L131.8 19.8 L135.5 19.4" stroke="#666666" stroke-opacity="0.17" stroke-width="0.7" fill="none"/>
<path d="M94.2 15.7 L98.2 16.2 L100.9 17.6 L103.6 20.2" stroke="#5e7f9a" stroke-opacity="0.18" stroke-width="0.7" fill="none"/>
<path d="M93.3 53.9 L97.6 54.3 L100.3 54.8" stroke="#56665c" stroke-opacity="0.33" stroke-width="0.6" fill="none"/>
<path d="M84.9 29.0 L87.5 28.6 L90.2 28.4 L93.9 27.3 L96.9 27.7" stroke="#5e7f9a" stroke-opacity="0.19" stroke-width="0.8" fill="none"/>
<path d="M190.7 30.0 L194.6 28.3 L197.9 26.0 L202.2 25.1" stroke="#4f4a5a" stroke-opacity="0.35" stroke-width="0.6" fill="none"/>
<path d="M-3.6 42.1 L-1.0 44.9 L2.0 48.2 L3.9 50.6 L5.6 52.7" stroke="#56665c" stroke-opacity="0.13" stroke-width="0.8" fill="none"/>
<path d="M103.3 63.2 L105.5 61.9 L108.1 60.1 L111.7 58.0" stroke="#5e7f9a" stroke-opacity="0.24" stroke-width="0.9" fill="none"/>
<path d="M181.8 2.5 L184.2 2.0 L188.0 3.3" stroke="#666666" stroke-opacity="0.16" stroke-width="0.8" fill="none"/>
<path d="M162.5 7.0 L165.2 8.4 L166.5 10.1 L168.2 12.2 L171.2 13.4 L174.4 13.1" stroke="#3f4a45" stroke-opacity="0.29" stroke-width="0.6" fill="none"/>
<path d="M186.9 38.6 L188.9 40.3 L190.5 40.7" stroke="#3f4a45" stroke-opacity="0.17" stroke-width="0.9" fill="none"/>
<path d="M182.2 21.8 L184.8 22.8 L186.7 22.7 L188.5 23.1" stroke="#3f4a45" stroke-opacity="0.14" stroke-width="0.9" fill="none"/>
<path d="M195.8 19.0 L199.0 20.6 L200.7 21.5" stroke="#4f4a5a" stroke-opacity="0.20" stroke-width="0.7" fill="none"/>
<path d="M-1.8 18.1 L1.1 18.4 L2.7 18.3" stroke="#5e7f9a" stroke-opacity="0.26" stroke-width="0.6" fill="none"/>
<path d="M99.9 18.6 L102.9 17.3 L104.2 16.5" stroke="#5e7f9a" stroke-opacity="0.19" stroke-width="0.8" fill="none"/>
<path d="M230.0 26.2 L233.0 28.0 L235.2 29.7 L238.4 31.5" stroke="#3f4a45" stroke-opacity="0.31" stroke-width="0.7" fill="none"/>
<path d="M11.9 48.5 L13.8 49.9 L15.2 51.1" stroke="#666666" stroke-opacity="0.33" stroke-width="0.8" fill="none"/>
<path d="M90.8 57.3 L93.5 57.4 L96.0 57.3 L98.3 57.1 L101.6 54.9" stroke="#4f4a5a" stroke-opacity="0.29" stroke-width="0.6" fill="none"/>
<path d="M39.1 23.2 L42.9 24.0 L45.5 23.7 L47.9 22.6 L51.0 21.7 L53.6 20.2" stroke="#4f4a5a" stroke-opacity="0.17" stroke-width="0.9" fill="none"/>
<path d="M158.8 0.2 L161.2 1.3 L164.5 1.8 L168.5 1.0 L171.0 -0.7 L173.0 -1.9" stroke="#5e7f9a" stroke-opacity="0.13" stroke-width="0.7" fill="none"/>
<path d="M67.7 33.0 L69.8 33.6 L74.0 33.1 L77.5 30.7" stroke="#666666" stroke-opacity="0.30" stroke-width="0.7" fill="none"/>
<path d="M6.5 38.3 L9.0 39.3 L12.9 40.1 L16.3 40.7" stroke="#4f4a5a" stroke-opacity="0.34" stroke-width="0.7" fill="none"/>
<path d="M-2.6 15.1 L-1.4 16.1 L0.4 18.3 L2.1 20.4 L3.2 21.8" stroke="#56665c" stroke-opacity="0.15" stroke-width="0.7" fill="none"/>
<path d="M168.1 59.8 L171.9 59.2 L175.0 57.1 L177.9 55.5" stroke="#4f4a5a" stroke-opacity="0.26" stroke-width="0.7" fill="none"/>
<path d="M132.5 12.9 L135.7 13.6 L137.0 14.9 L139.2 17.6 L141.8 20.8 L144.0 23.6" stroke="#4f4a5a" stroke-opacity="0.28" stroke-width="0.6" fill="none"/>
<path d="M187.9 45.5 L191.5 46.3 L193.8 48.7" stroke="#4f4a5a" stroke-opacity="0.19" stroke-width="0.6" fill="none"/>
<path d="M77.3 -0.2 L80.8 1.0 L83.3 3.2 L84.6 4.2 L86.3 6.4" stroke="#666666" stroke-opacity="0.32" stroke-width="0.7" fill="none"/>
<path d="M112.4 47.0 L114.4 46.9 L116.5 47.5 L120.9 47.5 L123.2 46.4" stroke="#3f4a45" stroke-opacity="0.17" stroke-width="0.8" fill="none"/>
<path d="M24.3 14.7 L26.5 14.3 L29.3 13.8 L31.7 14.6 L35.8 15.1 L38.8 14.0" stroke="#56665c" stroke-opacity="0.27" stroke-width="0.6" fill="none"/>
<path d="M127.1 10.4 L129.9 10.6 L133.6 12.3 L136.0 12.1" stroke="#56665c" stroke-opacity="0.24" stroke-width="0.6" fill="none"/>
<path d="M5.1 40.4 L6.9 40.2 L9.7 39.4 L11.5 38.6 L12.8 37.7" stroke="#5e7f9a" stroke-opacity="0.14" stroke-width="0.8" fill="none"/>
<path d="M235.1 22.0 L237.7 23.4 L239.3 25.3 L240.7 26.4 L243.8 27.7 L246.5 30.0" stroke="#4f4a5a" stroke-opacity="0.14" stroke-width="0.6" fill="none"/>
<path d="M-3.7 32.6 L-0.5 31.3 L3.7 31.3 L7.3 29.8 L11.0 29.8" stroke="#56665c" stroke-opacity="0.21" stroke-width="0.8" fill="none"/>
<path d="M70.0 34.4 L72.0 35.6 L73.8 35.6 L77.7 37.2 L79.4 39.4" stroke="#3f4a45" stroke-opacity="0.35" stroke-width="0.9" fill="none"/>
<path d="M95.7 12.1 L97.9 11.9 L100.9 10.2" stroke="#5e7f9a" stroke-opacity="0.14" stroke-width="0.6" fill="none"/>
<path d="M202.7 27.2 L206.0 25.0 L209.8 24.3 L212.1 23.7 L215.1 23.5" stroke="#5e7f9a" stroke-opacity="0.33" stroke-width="0.6" fill="none"/>
<path d="M99.7 15.9 L101.2 16.1 L104.3 17.7 L106.7 19.3" stroke="#666666" stroke-opacity="0.20" stroke-width="0.9" fill="none"/>
<path d="M97.1 23.8 L100.3 26.8 L102.8 29.9 L106.1 31.1" stroke="#666666" stroke-opacity="0.28" stroke-width="0.9" fill="none"/>
<path d="M228.2 27.2 L230.7 29.0 L233.5 31.8 L236.9 33.5 L238.4 34.7" stroke="#666666" stroke-opacity="0.21" stroke-width="0.9" fill="none"/>
<path d="M80.0 43.3 L81.9 42.5 L85.0 42.9 L88.9 41.4 L90.3 40.4" stroke="#666666" stroke-opacity="0.28" stroke-width="0.9" fill="none"/>
<path d="M46.7 28.6 L50.6 30.3 L54.1 32.3" stroke="#3f4a45" stroke-opacity="0.31" stroke-width="0.7" fill="none"/>
<path d="M205.9 22.8 L209.9 24.4 L212.6 25.5" stroke="#5e7f9a" stroke-opacity="0.25" stroke-width="0.7" fill="none"/>
<path d="M130.8 9.5 L132.4 9.3 L135.4 7.3" stroke="#4f4a5a" stroke-opacity="0.23" stroke-width="0.6" fill="none"/>
<path d="M166.9 30.6 L170.8 32.2 L172.2 33.7 L173.7 35.6" stroke="#3f4a45" stroke-opacity="0.32" stroke-width="0.6" fill="none"/>
<path d="M49.8 25.1 L51.3 25.8 L52.9 26.7 L56.1 28.8 L60.4 29.3" stroke="#4f4a5a" stroke-opacity="0.18" stroke-width="0.7" fill="none"/>
<path d="M163.5 61.9 L165.0 61.7 L168.3 59.5 L170.9 57.7 L173.8 55.7 L175.4 54.6" stroke="#56665c" stroke-opacity="0.25" stroke-width="0.8" fill="none"/>
<path d="M227.2 62.8 L230.1 62.9 L233.6 60.9 L236.4 59.0" stroke="#666666" stroke-opacity="0.21" stroke-width="0.9" fill="none"/>
<path d="M231.9 14.3 L234.7 16.0 L237.2 16.1 L241.2 14.9" stroke="#666666" stroke-opacity="0.27" stroke-width="0.7" fill="none"/>
<path d="M32.4 34.9 L35.0 34.8 L37.7 33.0 L39.0 32.1 L42.6 29.6 L44.2 28.5" stroke="#4f4a5a" stroke-opacity="0.19" stroke-width="0.8" fill="none"/>
<path d="M5.9 -2.5 L7.1 -1.6 L10.0 1.0 L12.4 4.0" stroke="#666666" stroke-opacity="0.27" stroke-width="0.8" fill="none"/>
<path d="M188.0 8.5 L190.3 9.1 L193.5 11.0 L196.4 12.7" stroke="#56665c" stroke-opacity="0.33" stroke-width="0.9" fill="none"/>
<path d="M73.6 13.6 L77.7 14.5 L81.5 16.9 L83.6 17.3 L86.4 19.3 L88.7 20.7" stroke="#56665c" stroke-opacity="0.34" stroke-width="0.6" fill="none"/>
<path d="M26.0 12.7 L27.8 11.7 L31.0 11.8 L33.5 11.2 L37.8 10.1" stroke="#5e7f9a" stroke-opacity="0.29" stroke-width="0.6" fill="none"/>
<path d="M199.6 37.7 L203.4 37.9 L205.6 38.3 L207.1 37.6 L210.9 35.8" stroke="#56665c" stroke-opacity="0.33" stroke-width="0.6" fill="none"/>
<path d="M39.2 11.9 L43.0 11.2 L45.5 11.9" stroke="#4f4a5a" stroke-opacity="0.12" stroke-width="0.8" fill="none"/>
<path d="M124.2 3.9 L126.7 3.5 L130.1 4.0" stroke="#5e7f9a" stroke-opacity="0.27" stroke-width="0.8" fill="none"/>
<path d="M33.6 4.5 L35.9 5.5 L39.0 6.8" stroke="#56665c" stroke-opacity="0.35" stroke-width="0.6" fill="none"/>
<path d="M-3.6 37.9 L-0.4 36.8 L2.1 36.6 L3.7 35.6 L6.9 33.4" stroke="#3f4a45" stroke-opacity="0.21" stroke-width="0.8" fill="none"/>
<path d="M95.8 23.5 L98.9 24.7 L102.6 25.2 L106.2 24.7" stroke="#3f4a45" stroke-opacity="0.31" stroke-width="0.8" fill="none"/>
<path d="M152.9 22.9 L156.0 23.0 L158.2 22.5 L160.0 22.3 L164.3 23.2" stroke="#4f4a5a" stroke-opacity="0.36" stroke-width="0.7" fill="none"/>
<path d="M90.2 -1.9 L93.3 -2.3 L96.7 -4.1 L99.4 -5.9" stroke="#4f4a5a" stroke-opacity="0.34" stroke-width="0.7" fill="none"/>
<path d="M122.1 35.6 L124.2 37.7 L125.8 39.7 L127.6 42.0 L130.8 44.6 L134.4 45.4" stroke="#3f4a45" stroke-opacity="0.31" stroke-width="0.9" fill="none"/>
<path d="M158.6 35.6 L162.8 35.1 L165.9 36.6 L168.1 36.8 L170.9 36.2 L172.7 35.2" stroke="#5e7f9a" stroke-opacity="0.27" stroke-width="0.8" fill="none"/>
<path d="M209.9 26.0 L213.9 27.4 L217.5 30.0 L219.8 30.4" stroke="#3f4a45" stroke-opacity="0.20" stroke-width="0.9" fill="none"/>
<path d="M208.0 42.6 L209.6 42.1 L213.7 42.2 L215.2 42.8 L217.5 44.5 L219.1 45.5" stroke="#56665c" stroke-opacity="0.28" stroke-width="0.6" fill="none"/>
<path d="M28.0 1.8 L31.3 0.1 L33.0 -1.0 L34.6 -1.6 L38.2 -3.9" stroke="#5e7f9a" stroke-opacity="0.33" stroke-width="0.6" fill="none"/>
<path d="M136.3 46.1 L139.1 45.0 L141.4 43.5" stroke="#3f4a45" stroke-opacity="0.29" stroke-width="0.6" fill="none"/>
<path d="M237.7 37.9 L240.6 41.2 L241.6 42.4" stroke="#4f4a5a" stroke-opacity="0.28" stroke-width="0.7" fill="none"/>
<path d="M148.3 23.1 L151.5 26.1 L155.8 27.2 L159.2 29.9 L160.8 30.5" stroke="#4f4a5a" stroke-opacity="0.12" stroke-width="0.8" fill="none"/>
<path d="M7.2 59.5 L11.1 61.5 L13.5 62.0 L16.2 61.0 L18.3 59.6 L22.0 57.0" stroke="#56665c" stroke-opacity="0.22" stroke-width="0.8" fill="none"/>
<path d="M125.0 33.4 L128.6 35.1 L130.7 37.7 L133.2 39.4 L135.4 42.2 L138.2 45.7" stroke="#4f4a5a" stroke-opacity="0.28" stroke-width="0.6" fill="none"/>
<path d="M200.8 9.0 L203.9 9.6 L206.5 10.8" stroke="#56665c" stroke-opacity="0.23" stroke-width="0.6" fill="none"/>
<path d="M108.4 17.0 L112.7 18.0 L116.1 17.6 L118.7 18.2 L121.1 19.3" stroke="#666666" stroke-opacity="0.18" stroke-width="0.8" fill="none"/>
<path d="M8.0 8.3 L12.0 7.9 L14.4 8.8 L17.3 10.2 L18.3 11.5" stroke="#666666" stroke-opacity="0.21" stroke-width="0.7" fill="none"/>
<path d="M121.9 7.4 L125.1 6.0 L128.6 3.5 L132.1 2.9" stroke="#3f4a45" stroke-opacity="0.20" stroke-width="0.8" fill="none"/>
<path d="M198.0 7.1 L200.6 7.6 L204.1 7.8 L206.5 7.9" stroke="#3f4a45" stroke-opacity="0.19" stroke-width="0.8" fill="none"/>
<path d="M239.2 14.2 L241.1 14.9 L242.5 15.5 L245.5 15.4 L248.8 15.9 L252.7 16.6" stroke="#56665c" stroke-opacity="0.12" stroke-width="0.7" fill="none"/>
<path d="M-9.8 41.9 L-7.7 42.8 L-5.5 43.3 L-4.1 44.3 L-1.2 47.2" stroke="#4f4a5a" stroke-opacity="0.15" stroke-width="0.8" fill="none"/>
<path d="M144.5 34.2 L146.0 33.8 L150.4 34.2 L153.8 34.1 L155.9 33.5 L157.8 33.7" stroke="#666666" stroke-opacity="0.17" stroke-width="0.8" fill="none"/>
<path d="M5.8 46.0 L8.0 47.5 L10.4 49.2" stroke="#3f4a45" stroke-opacity="0.15" stroke-width="0.9" fill="none"/>
<path d="M223.8 13.8 L225.4 13.3 L227.1 12.6 L228.7 12.4 L230.6 11.5 L234.5 9.9" stroke="#56665c" stroke-opacity="0.25" stroke-width="0.9" fill="none"/>
<path d="M182.5 52.7 L184.0 52.8 L188.0 53.1" stroke="#4f4a5a" stroke-opacity="0.26" stroke-width="0.6" fill="none"/>
<path d="M196.0 46.2 L199.7 46.7 L201.4 47.6" stroke="#5e7f9a" stroke-opacity="0.32" stroke-width="0.7" fill="none"/>
<path d="M70.1 47.0 L71.6 48.8 L73.6 50.2 L77.4 51.5" stroke="#666666" stroke-opacity="0.21" stroke-width="0.9" fill="none"/>
<path d="M160.3 38.6 L164.1 40.1 L166.2 40.2 L168.9 38.9 L171.3 37.2 L174.0 35.4" stroke="#56665c" stroke-opacity="0.34" stroke-width="0.8" fill="none"/>
<path d="M40.1 1.4 L41.5 2.1 L45.8 1.6" stroke="#56665c" stroke-opacity="0.13" stroke-width="0.7" fill="none"/>
<path d="M189.0 39.6 L192.7 40.0 L194.7 39.5 L198.1 37.2 L199.7 36.1 L203.6 35.6" stroke="#5e7f9a" stroke-opacity="0.16" stroke-width="0.7" fill="none"/>
<path d="M114.6 15.4 L117.2 17.1 L121.0 17.7 L123.7 18.9 L125.7 19.7" stroke="#3f4a45" stroke-opacity="0.35" stroke-width="0.9" fill="none"/>
<path d="M45.9 6.2 L47.7 7.1 L51.3 6.7 L54.6 4.5 L56.4 3.2 L58.6 2.0" stroke="#666666" stroke-opacity="0.29" stroke-width="0.8" fill="none"/>
<path d="M218.0 37.4 L220.4 39.9 L224.3 42.0 L226.2 42.5" stroke="#56665c" stroke-opacity="0.17" stroke-width="0.6" fill="none"/>
<path d="M39.5 50.2 L41.3 50.5 L42.9 51.6 L45.7 55.1 L47.6 57.5" stroke="#56665c" stroke-opacity="0.24" stroke-width="0.6" fill="none"/>
<path d="M177.6 26.2 L179.9 26.1 L183.1 25.2" stroke="#3f4a45" stroke-opacity="0.17" stroke-width="0.9" fill="none"/>
<path d="M57.8 2.9 L60.0 3.8 L61.6 4.6 L63.7 4.3" stroke="#4f4a5a" stroke-opacity="0.28" stroke-width="0.6" fill="none"/>
<path d="M33.0 35.6 L34.9 36.4 L36.6 38.1 L39.7 38.8 L42.8 38.0" stroke="#4f4a5a" stroke-opacity="0.26" stroke-width="0.9" fill="none"/>
<path d="M-1.0 59.9 L0.8 60.5 L3.1 61.6 L6.4 62.5 L8.4 62.3 L10.7 63.3" stroke="#5e7f9a" stroke-opacity="0.19" stroke-width="0.8" fill="none"/>
<path d="M13.5 3.7 L16.5 2.7 L18.4 1.5 L19.9 0.8 L23.4 -1.6 L26.1 -3.4" stroke="#4f4a5a" stroke-opacity="0.34" stroke-width="0.7" fill="none"/>
<path d="M212.7 62.6 L215.5 64.9 L219.0 66.1 L221.0 65.7 L225.3 66.8 L228.7 67.3" stroke="#3f4a45" stroke-opacity="0.19" stroke-width="0.6" fill="none"/>
<path d="M11.1 21.1 L12.7 21.8 L14.4 22.1" stroke="#4f4a5a" stroke-opacity="0.27" stroke-width="0.7" fill="none"/>
<path d="M193.7 36.2 L195.6 36.9 L199.8 37.6 L201.2 38.4 L202.5 39.8 L203.8 41.3" stroke="#56665c" stroke-opacity="0.30" stroke-width="0.7" fill="none"/>
<path d="M39.6 44.8 L42.6 47.1 L45.1 48.8" stroke="#56665c" stroke-opacity="0.34" stroke-width="0.6" fill="none"/>
<path d="M39.8 18.3 L43.3 17.5 L45.2 16.8 L48.6 17.4 L50.3 18.2 L53.2 21.5" stroke="#3f4a45" stroke-opacity="0.30" stroke-width="0.7" fill="none"/>
<path d="M98.8 6.7 L101.6 8.4 L104.1 10.7 L107.9 11.5 L111.0 13.6" stroke="#4f4a5a" stroke-opacity="0.18" stroke-width="0.9" fill="none"/>
<path d="M130.4 3.7 L134.3 3.9 L137.5 5.2" stroke="#56665c" stroke-opacity="0.32" stroke-width="0.9" fill="none"/>
<path d="M227.0 44.1 L230.9 45.8 L233.2 46.5 L236.5 46.7 L239.9 49.1" stroke="#5e7f9a" stroke-opacity="0.22" stroke-width="0.8" fill="none"/>
<path d="M104.4 36.6 L107.2 36.2 L109.3 34.8 L111.4 34.8 L113.8 36.0" stroke="#666666" stroke-opacity="0.31" stroke-width="0.6" fill="none"/>
<path d="M44.1 18.2 L46.6 18.0 L48.3 17.1 L51.6 14.9" stroke="#5e7f9a" stroke-opacity="0.19" stroke-width="0.8" fill="none"/>
<path d="M228.9 25.5 L232.1 28.6 L233.3 29.5 L234.4 30.9" stroke="#4f4a5a" stroke-opacity="0.23" stroke-width="0.8" fill="none"/>
<path d="M174.1 15.3 L177.9 14.9 L180.4 13.9 L182.8 13.0 L184.7 11.6 L187.7 9.6" stroke="#5e7f9a" stroke-opacity="0.35" stroke-width="0.6" fill="none"/>
<path d="M216.8 26.1 L220.4 24.3 L223.4 23.5" stroke="#5e7f9a" stroke-opacity="0.19" stroke-width="0.7" fill="none"/>
<path d="M172.2 11.0 L173.7 10.8 L175.8 11.8 L180.1 12.0 L184.6 12.2" stroke="#4f4a5a" stroke-opacity="0.30" stroke-width="0.8" fill="none"/>
<path d="M146.8 43.2 L151.2 43.8 L154.9 45.1" stroke="#5e7f9a" stroke-opacity="0.24" stroke-width="0.8" fill="none"/>
<path d="M162.7 40.6 L166.3 42.0 L168.2 42.3 L172.3 43.2 L175.9 42.4 L177.9 41.0" stroke="#3f4a45" stroke-opacity="0.26" stroke-width="0.9" fill="none"/>
<path d="M184.3 35.0 L188.6 34.9 L190.9 34.0 L192.5 33.2 L194.7 31.7" stroke="#5e7f9a" stroke-opacity="0.31" stroke-width="0.9" fill="none"/>
<path d="M56.7 45.9 L59.3 46.8 L63.5 46.4 L65.4 45.0 L68.3 43.2 L71.1 42.8" stroke="#3f4a45" stroke-opacity="0.19" stroke-width="0.8" fill="none"/>
<path d="M169.3 32.6 L173.1 32.5 L176.5 30.4" stroke="#666666" stroke-opacity="0.19" stroke-width="0.8" fill="none"/>
<path d="M56.4 43.0 L59.8 43.9 L63.7 44.4" stroke="#3f4a45" stroke-opacity="0.34" stroke-width="0.7" fill="none"/>
<path d="M151.2 -1.2 L153.5 0.1 L155.8 3.0" stroke="#56665c" stroke-opacity="0.22" stroke-width="0.9" fill="none"/>
<path d="M191.4 35.7 L194.5 35.7 L198.6 36.7 L201.1 36.1" stroke="#3f4a45" stroke-opacity="0.34" stroke-width="0.6" fill="none"/>
<path d="M115.5 5.2 L118.7 5.5 L122.7 4.7 L126.7 5.3 L130.1 4.4 L133.1 4.6" stroke="#56665c" stroke-opacity="0.34" stroke-width="0.9" fill="none"/>
<path d="M209.7 51.6 L211.8 52.4 L215.1 51.9 L217.4 52.4 L219.5 52.1 L222.4 50.1" stroke="#3f4a45" stroke-opacity="0.21" stroke-width="0.6" fill="none"/>
<path d="M20.5 -0.5 L22.4 -0.2 L24.0 -0.4 L27.1 -1.0 L28.7 -0.7 L30.3 0.3" stroke="#4f4a5a" stroke-opacity="0.19" stroke-width="0.8" fill="none"/>
<path d="M231.2 24.0 L235.5 22.9 L239.0 22.3 L240.8 21.3" stroke="#666666" stroke-opacity="0.18" stroke-width="0.8" fill="none"/>
<path d="M5.8 18.0 L8.8 18.3 L10.9 18.8" stroke="#3f4a45" stroke-opacity="0.31" stroke-width="0.8" fill="none"/>
<path d="M154.5 42.4 L158.8 42.9 L161.7 44.7 L165.0 45.3" stroke="#3f4a45" stroke-opacity="0.22" stroke-width="0.8" fill="none"/>
<path d="M179.9 56.3 L181.9 56.8 L183.8 57.7" stroke="#56665c" stroke-opacity="0.17" stroke-width="0.8" fill="none"/>
<path d="M176.9 -0.2 L179.0 -0.6 L182.4 -2.9" stroke="#666666" stroke-opacity="0.18" stroke-width="0.8" fill="none"/>
<path d="M146.9 21.9 L148.5 21.6 L150.6 20.2 L154.5 19.8 L156.3 19.5" stroke="#3f4a45" stroke-opacity="0.33" stroke-width="0.8" fill="none"/>
<path d="M184.4 27.8 L186.6 29.6 L187.8 31.1 L190.7 32.4 L192.6 33.4" stroke="#56665c" stroke-opacity="0.28" stroke-width="0.7" fill="none"/>
<path d="M167.6 -0.0 L170.4 2.3 L174.5 3.4 L176.4 3.7 L179.9 2.7 L181.4 2.3" stroke="#3f4a45" stroke-opacity="0.23" stroke-width="0.6" fill="none"/>
<path d="M41.0 21.5 L44.1 21.8 L47.9 22.1 L49.2 22.9 L51.7 23.4" stroke="#3f4a45" stroke-opacity="0.14" stroke-width="0.7" fill="none"/>
<path d="M226.2 29.7 L229.1 31.2 L232.1 33.9 L235.4 35.1 L238.6 38.2 L240.4 40.5" stroke="#5e7f9a" stroke-opacity="0.27" stroke-width="0.6" fill="none"/>
<path d="M217.3 19.9 L221.3 21.1 L224.3 20.1 L226.5 20.1" stroke="#3f4a45" stroke-opacity="0.18" stroke-width="0.7" fill="none"/>
<path d="M190.7 60.0 L194.6 61.9 L195.8 63.1 L197.9 65.5" stroke="#5e7f9a" stroke-opacity="0.18" stroke-width="0.7" fill="none"/>
<path d="M107.0 27.3 L110.9 27.1 L113.6 25.8" stroke="#3f4a45" stroke-opacity="0.24" stroke-width="0.9" fill="none"/>
<path d="M219.1 64.5 L222.3 65.4 L225.9 66.9" stroke="#3f4a45" stroke-opacity="0.29" stroke-width="0.8" fill="none"/>
<path d="M104.3 15.6 L107.9 14.0 L110.8 13.8 L113.8 12.2" stroke="#4f4a5a" stroke-opacity="0.28" stroke-width="0.6" fill="none"/>
<path d="M143.2 55.4 L145.2 54.6 L149.7 55.1" stroke="#3f4a45" stroke-opacity="0.21" stroke-width="0.8" fill="none"/>
<path d="M67.3 39.3 L68.7 40.0 L70.5 39.9 L73.8 40.4 L76.6 41.0" stroke="#5e7f9a" stroke-opacity="0.34" stroke-width="0.7" fill="none"/>
<path d="M219.1 12.0 L222.0 14.2 L225.5 14.6" stroke="#5e7f9a" stroke-opacity="0.31" stroke-width="0.6" fill="none"/>
<path d="M35.0 0.1 L37.3 -0.3 L39.6 -1.3 L41.9 -2.9" stroke="#5e7f9a" stroke-opacity="0.30" stroke-width="0.8" fill="none"/>
<path d="M58.5 42.6 L61.7 42.3 L65.5 41.2" stroke="#3f4a45" stroke-opacity="0.30" stroke-width="0.7" fill="none"/>
<path d="M212.5 8.4 L216.2 6.8 L218.4 5.6" stroke="#3f4a45" stroke-opacity="0.25" stroke-width="0.9" fill="none"/>
<path d="M30.3 24.0 L32.3 25.8 L34.5 28.6 L35.6 30.0" stroke="#4f4a5a" stroke-opacity="0.17" stroke-width="0.6" fill="none"/>
<path d="M168.6 30.3 L171.9 30.6 L176.0 29.2 L178.3 27.8" stroke="#56665c" stroke-opacity="0.18" stroke-width="0.6" fill="none"/>
<path d="M12.9 4.4 L16.0 5.6 L18.0 7.0 L19.7 7.1" stroke="#3f4a45" stroke-opacity="0.14" stroke-width="0.6" fill="none"/>
<path d="M25.6 53.1 L27.9 54.8 L29.3 56.6 L31.8 59.1 L36.0 60.7" stroke="#3f4a45" stroke-opacity="0.33" stroke-width="0.9" fill="none"/>
<path d="M75.6 6.3 L77.4 5.2 L79.5 3.7 L83.1 2.0" stroke="#3f4a45" stroke-opacity="0.34" stroke-width="0.7" fill="none"/>
<path d="M185.6 16.1 L187.4 15.5 L191.1 13.0 L194.0 11.0 L195.8 9.9" stroke="#3f4a45" stroke-opacity="0.19" stroke-width="0.8" fill="none"/>
<path d="M203.1 51.7 L205.0 52.5 L208.6 53.3 L210.6 53.4 L214.6 54.5" stroke="#4f4a5a" stroke-opacity="0.19" stroke-width="0.9" fill="none"/>
<path d="M223.1 60.9 L226.6 62.8 L230.7 63.7 L232.2 63.5" stroke="#3f4a45" stroke-opacity="0.28" stroke-width="0.8" fill="none"/>
<path d="M48.7 61.0 L51.7 59.8 L54.2 58.8" stroke="#5e7f9a" stroke-opacity="0.24" stroke-width="0.7" fill="none"/>
<path d="M217.5 30.7 L219.6 29.2 L223.2 26.8 L224.6 25.9" stroke="#4f4a5a" stroke-opacity="0.24" stroke-width="0.7" fill="none"/>
<path d="M130.7 4.2 L135.0 3.6 L137.2 3.3 L140.8 1.4 L142.3 0.4 L145.8 -2.0" stroke="#5e7f9a" stroke-opacity="0.31" stroke-width="0.7" fill="none"/>
<path d="M8.6 28.9 L12.4 28.1 L15.4 26.0 L17.2 24.7" stroke="#666666" stroke-opacity="0.12" stroke-width="0.6" fill="none"/>
<path d="M150.9 14.6 L154.3 15.5 L156.8 15.0 L160.8 13.7" stroke="#56665c" stroke-opacity="0.30" stroke-width="0.8" fill="none"/>
<path d="M154.1 16.8 L158.1 18.1 L160.2 17.8" stroke="#3f4a45" stroke-opacity="0.19" stroke-width="0.7" fill="none"/>
<path d="M199.8 38.7 L202.1 40.2 L203.2 41.3 L204.6 43.0" stroke="#5e7f9a" stroke-opacity="0.21" stroke-width="0.9" fill="none"/>
<path d="M158.1 45.3 L159.7 46.7 L161.5 48.9 L165.2 51.3" stroke="#56665c" stroke-opacity="0.13" stroke-width="0.7" fill="none"/>
<path d="M75.8 15.7 L77.9 16.2 L79.5 17.4 L81.6 20.0 L83.6 22.4" stroke="#5e7f9a" stroke-opacity="0.15" stroke-width="0.7" fill="none"/>
<path d="M130.5 40.9 L132.0 42.1 L135.4 43.8 L138.1 44.0" stroke="#3f4a45" stroke-opacity="0.26" stroke-width="0.9" fill="none"/>
<path d="M187.5 42.3 L191.1 44.8 L195.3 46.1 L196.9 46.4" stroke="#3f4a45" stroke-opacity="0.35" stroke-width="0.8" fill="none"/>
<path d="M7.6 10.8 L10.7 10.4 L14.4 11.6 L17.1 13.0" stroke="#3f4a45" stroke-opacity="0.23" stroke-width="0.9" fill="none"/>
<path d="M154.5 20.6 L157.8 21.2 L160.4 20.9 L164.5 22.3" stroke="#4f4a5a" stroke-opacity="0.22" stroke-width="0.8" fill="none"/>
<path d="M159.3 56.6 L161.8 56.3 L164.4 57.4 L168.1 58.1 L171.2 61.0 L173.1 62.6" stroke="#4f4a5a" stroke-opacity="0.35" stroke-width="0.6" fill="none"/>
<path d="M229.5 45.7 L231.3 46.9 L233.0 48.8 L235.4 51.8" stroke="#4f4a5a" stroke-opacity="0.36" stroke-width="0.7" fill="none"/>
<path d="M209.7 53.1 L213.0 54.0 L215.8 54.7 L219.0 54.8 L222.7 54.2 L226.3 52.7" stroke="#3f4a45" stroke-opacity="0.28" stroke-width="0.7" fill="none"/>
<path d="M88.5 52.8 L91.4 54.7 L94.0 57.1 L95.3 58.8 L96.8 60.6" stroke="#56665c" stroke-opacity="0.16" stroke-width="0.6" fill="none"/>
<path d="M140.3 5.3 L141.8 5.2 L145.5 5.1" stroke="#56665c" stroke-opacity="0.13" stroke-width="0.6" fill="none"/>
<path d="M199.3 55.5 L201.5 54.8 L205.9 54.5 L207.4 53.5" stroke="#3f4a45" stroke-opacity="0.35" stroke-width="0.7" fill="none"/>
<path d="M107.5 56.6 L110.4 56.5 L112.0 55.9 L113.6 54.8 L116.4 52.9" stroke="#56665c" stroke-opacity="0.15" stroke-width="0.8" fill="none"/>
<path d="M75.4 26.5 L79.3 27.6 L81.6 28.1" stroke="#3f4a45" stroke-opacity="0.18" stroke-width="0.6" fill="none"/>
<path d="M190.5 54.7 L193.0 56.1 L196.5 58.0 L199.7 60.3" stroke="#5e7f9a" stroke-opacity="0.26" stroke-width="0.7" fill="none"/>
<path d="M-6.7 0.6 L-4.5 -0.1 L-1.7 -1.3 L-0.1 -1.5 L2.0 -1.2 L5.4 -1.6" stroke="#5e7f9a" stroke-opacity="0.27" stroke-width="0.7" fill="none"/>
<path d="M41.2 38.3 L42.8 37.9 L45.2 37.2 L48.7 37.0 L52.6 37.8" stroke="#5e7f9a" stroke-opacity="0.20" stroke-width="0.8" fill="none"/>
<path d="M3.9 19.3 L6.0 18.7 L8.8 16.8" stroke="#4f4a5a" stroke-opacity="0.23" stroke-width="0.7" fill="none"/>
<path d="M70.1 9.0 L72.8 10.2 L74.5 10.6 L77.6 12.0 L79.2 12.5" stroke="#666666" stroke-opacity="0.17" stroke-width="0.8" fill="none"/>
<path d="M203.1 0.4 L206.9 0.9 L209.1 1.8 L212.9 1.3 L216.4 -1.1" stroke="#4f4a5a" stroke-opacity="0.13" stroke-width="0.7" fill="none"/>
<path d="M5.8 14.8 L9.1 16.0 L12.1 16.4" stroke="#4f4a5a" stroke-opacity="0.21" stroke-width="0.6" fill="none"/>
<path d="M169.0 11.8 L172.6 11.6 L176.4 10.6 L179.1 10.2" stroke="#4f4a5a" stroke-opacity="0.16" stroke-width="0.9" fill="none"/>
<path d="M167.0 34.8 L168.2 36.2 L171.3 38.3 L173.9 41.6 L176.7 44.9 L178.2 46.7" stroke="#5e7f9a" stroke-opacity="0.21" stroke-width="0.7" fill="none"/>
<path d="M173.5 51.7 L177.0 49.9 L178.8 48.6 L181.2 47.0 L183.2 47.0 L185.4 48.0" stroke="#4f4a5a" stroke-opacity="0.30" stroke-width="0.8" fill="none"/>
<path d="M160.7 16.3 L163.7 17.4 L167.4 16.5" stroke="#666666" stroke-opacity="0.13" stroke-width="0.6" fill="none"/>
<path d="M228.0 37.2 L229.6 38.9 L231.3 41.1 L234.8 43.6 L238.3 43.8" stroke="#666666" stroke-opacity="0.30" stroke-width="0.7" fill="none"/>
<path d="M194.2 17.2 L198.1 18.1 L201.5 17.8 L205.5 17.0" stroke="#4f4a5a" stroke-opacity="0.18" stroke-width="0.8" fill="none"/>
<path d="M157.7 58.3 L160.8 61.1 L165.0 62.3 L167.9 64.2" stroke="#3f4a45" stroke-opacity="0.31" stroke-width="0.9" fill="none"/>
<path d="M226.5 27.8 L228.9 28.8 L230.8 28.5 L234.8 29.9" stroke="#3f4a45" stroke-opacity="0.17" stroke-width="0.6" fill="none"/>
<path d="M143.8 26.1 L146.2 26.3 L148.8 26.5 L152.9 27.4 L155.2 28.2 L159.2 28.7" stroke="#56665c" stroke-opacity="0.26" stroke-width="0.6" fill="none"/>
<path d="M140.0 -2.9 L142.6 -2.1 L145.2 0.3" stroke="#4f4a5a" stroke-opacity="0.17" stroke-width="0.8" fill="none"/>
<path d="M221.9 16.3 L225.0 17.1 L226.8 16.5" stroke="#3f4a45" stroke-opacity="0.16" stroke-width="0.8" fill="none"/>
<path d="M195.1 8.8 L198.1 10.1 L200.7 9.8 L204.1 11.3" stroke="#4f4a5a" stroke-opacity="0.21" stroke-width="0.6" fill="none"/>
<path d="M222.4 46.1 L226.9 46.3 L230.6 46.5 L234.1 44.4 L236.5 43.3" stroke="#666666" stroke-opacity="0.34" stroke-width="0.7" fill="none"/>
<path d="M35.8 1.9 L38.0 3.4 L39.3 5.0" stroke="#3f4a45" stroke-opacity="0.34" stroke-width="0.7" fill="none"/>
<path d="M117.7 0.7 L120.4 -0.0 L122.0 -1.1 L125.1 -2.3" stroke="#4f4a5a" stroke-opacity="0.22" stroke-width="0.9" fill="none"/>
<path d="M3.5 9.6 L5.4 10.8 L8.4 11.6 L11.6 11.2" stroke="#4f4a5a" stroke-opacity="0.35" stroke-width="0.6" fill="none"/>
<path d="M177.3 13.2 L179.6 14.8 L181.9 16.6 L186.0 16.7 L189.8 18.6" stroke="#666666" stroke-opacity="0.28" stroke-width="0.7" fill="none"/>
<path d="M70.0 48.4 L73.6 48.0 L75.6 49.0 L77.2 51.0 L78.8 52.8" stroke="#4f4a5a" stroke-opacity="0.23" stroke-width="0.7" fill="none"/>
<path d="M38.3 38.0 L42.3 38.1 L45.4 39.2 L47.6 39.9" stroke="#666666" stroke-opacity="0.17" stroke-width="0.7" fill="none"/>
<path d="M115.0 43.8 L117.3 45.4 L119.8 46.6 L123.2 47.5 L125.1 47.8 L127.8 49.5" stroke="#3f4a45" stroke-opacity="0.13" stroke-width="0.9" fill="none"/>
<path d="M78.6 18.0 L80.8 20.6 L83.9 22.0 L85.1 23.1 L87.2 25.7 L88.8 27.8" stroke="#56665c" stroke-opacity="0.26" stroke-width="0.7" fill="none"/>
<path d="M75.0 0.0 L77.2 0.8 L81.4 0.3 L84.4 1.8 L86.3 3.9 L88.9 5.5" stroke="#3f4a45" stroke-opacity="0.20" stroke-width="0.8" fill="none"/>
<path d="M149.8 27.4 L152.9 28.0 L154.2 28.9 L155.3 30.2 L157.4 32.8 L161.3 34.1" stroke="#56665c" stroke-opacity="0.32" stroke-width="0.7" fill="none"/>
<path d="M224.8 33.8 L228.1 31.6 L229.9 30.4 L231.8 29.1" stroke="#3f4a45" stroke-opacity="0.35" stroke-width="0.6" fill="none"/>
<path d="M183.2 50.2 L186.6 52.4 L188.3 53.2" stroke="#4f4a5a" stroke-opacity="0.26" stroke-width="0.8" fill="none"/>
<path d="M-0.5 58.2 L3.0 57.3 L5.4 55.7" stroke="#3f4a45" stroke-opacity="0.16" stroke-width="0.8" fill="none"/>
<path d="M158.1 -1.3 L160.8 -1.7 L163.7 -2.4 L166.6 -4.3 L168.6 -4.6 L172.2 -3.2" stroke="#3f4a45" stroke-opacity="0.23" stroke-width="0.6" fill="none"/>
<path d="M185.8 23.0 L189.8 24.0 L192.2 24.9" stroke="#5e7f9a" stroke-opacity="0.24" stroke-width="0.7" fill="none"/>
<path d="M204.9 1.7 L208.4 2.2 L211.7 1.3 L215.8 0.2" stroke="#666666" stroke-opacity="0.35" stroke-width="0.8" fill="none"/>
<path d="M93.5 15.7 L96.5 15.6 L100.9 15.8 L104.8 14.3 L108.5 11.8 L111.4 9.8" stroke="#666666" stroke-opacity="0.32" stroke-width="0.8" fill="none"/>
<path d="M69.6 10.5 L73.3 9.0 L75.5 8.1 L77.2 8.3 L80.3 10.4" stroke="#4f4a5a" stroke-opacity="0.22" stroke-width="0.6" fill="none"/>
<path d="M133.3 2.1 L134.7 2.7 L136.4 3.6 L140.2 5.1 L142.7 6.5 L145.1 9.5" stroke="#3f4a45" stroke-opacity="0.30" stroke-width="0.8" fill="none"/>
<path d="M14.4 26.3 L16.6 25.7 L18.7 25.8 L21.7 25.9" stroke="#666666" stroke-opacity="0.22" stroke-width="0.8" fill="none"/>
<path d="M104.1 4.5 L105.4 5.5 L107.8 8.6 L110.4 10.6 L112.8 13.5 L114.3 15.5" stroke="#5e7f9a" stroke-opacity="0.33" stroke-width="0.8" fill="none"/>
<path d="M193.7 60.5 L197.3 59.1 L199.5 59.2" stroke="#666666" stroke-opacity="0.23" stroke-width="0.6" fill="none"/>
<path d="M172.3 36.1 L174.5 38.7 L176.6 41.4 L178.1 43.2" stroke="#4f4a5a" stroke-opacity="0.16" stroke-width="0.7" fill="none"/>
<path d="M108.5 8.9 L112.5 7.6 L116.8 6.8" stroke="#3f4a45" stroke-opacity="0.27" stroke-width="0.9" fill="none"/>
<path d="M43.1 31.3 L46.6 32.5 L49.5 32.5 L53.5 34.2 L54.8 35.7" stroke="#3f4a45" stroke-opacity="0.25" stroke-width="0.9" fill="none"/>
<path d="M212.4 1.7 L214.6 2.3 L217.7 2.8 L220.6 4.2 L224.8 4.4 L229.1 3.9" stroke="#4f4a5a" stroke-opacity="0.24" stroke-width="0.8" fill="none"/>
<path d="M231.7 33.3 L233.9 34.4 L237.9 36.2 L240.3 37.1 L243.6 39.9" stroke="#56665c" stroke-opacity="0.24" stroke-width="0.7" fill="none"/>
<path d="M125.8 4.6 L127.8 4.2 L131.2 2.7 L134.4 2.2 L136.4 1.6" stroke="#3f4a45" stroke-opacity="0.17" stroke-width="0.6" fill="none"/>
<path d="M178.3 43.5 L182.3 45.5 L185.1 47.8 L186.8 47.9 L191.2 47.8" stroke="#56665c" stroke-opacity="0.33" stroke-width="0.6" fill="none"/>
<path d="M118.8 35.6 L120.8 34.9 L124.1 32.6 L127.6 30.2" stroke="#56665c" stroke-opacity="0.26" stroke-width="0.8" fill="none"/>
<path d="M158.7 33.4 L162.6 32.7 L164.3 33.4" stroke="#56665c" stroke-opacity="0.24" stroke-width="0.9" fill="none"/>
<path d="M81.1 16.1 L83.2 18.8 L84.4 20.3" stroke="#56665c" stroke-opacity="0.25" stroke-width="0.8" fill="none"/>
<path d="M219.8 34.3 L221.7 33.8 L225.5 33.2 L228.0 31.6" stroke="#666666" stroke-opacity="0.14" stroke-width="0.9" fill="none"/>
<path d="M93.2 23.2 L94.9 22.5 L96.4 22.6" stroke="#56665c" stroke-opacity="0.18" stroke-width="0.6" fill="none"/>
<path d="M198.7 20.5 L200.7 21.3 L204.0 23.7 L206.5 25.2 L208.6 27.8 L210.1 28.7" stroke="#3f4a45" stroke-opacity="0.31" stroke-width="0.6" fill="none"/>
<path d="M74.7 56.1 L78.9 57.2 L80.8 57.1" stroke="#56665c" stroke-opacity="0.22" stroke-width="0.6" fill="none"/>
<path d="M166.6 30.5 L171.0 30.3 L174.6 31.3" stroke="#3f4a45" stroke-opacity="0.19" stroke-width="0.6" fill="none"/>
<path d="M73.8 54.0 L75.8 54.5 L78.3 55.7 L79.7 56.8" stroke="#5e7f9a" stroke-opacity="0.12" stroke-width="0.7" fill="none"/>
<path d="M155.5 54.1 L157.4 55.7 L160.7 57.1 L163.4 57.2 L166.0 58.0" stroke="#4f4a5a" stroke-opacity="0.14" stroke-width="0.6" fill="none"/>
<path d="M125.8 -2.5 L129.2 -1.9 L131.0 -2.1" stroke="#5e7f9a" stroke-opacity="0.26" stroke-width="0.9" fill="none"/>
<path d="M63.0 0.6 L64.7 0.3 L68.0 -0.6 L69.7 -1.7 L73.4 -1.8 L77.0 -0.5" stroke="#3f4a45" stroke-opacity="0.15" stroke-width="0.8" fill="none"/>
<path d="M50.0 44.7 L53.6 45.2 L57.2 45.1 L61.4 43.9 L62.9 43.4" stroke="#3f4a45" stroke-opacity="0.25" stroke-width="0.9" fill="none"/>
<path d="M206.2 17.6 L208.0 18.0 L211.5 18.3 L212.9 17.5 L216.3 15.2" stroke="#666666" stroke-opacity="0.20" stroke-width="0.9" fill="none"/>
<path d="M232.3 17.2 L234.4 17.4 L236.2 18.1 L239.3 18.7" stroke="#4f4a5a" stroke-opacity="0.27" stroke-width="0.7" fill="none"/>
<path d="M116.0 31.1 L118.2 30.3 L121.0 28.4 L123.2 26.9" stroke="#5e7f9a" stroke-opacity="0.18" stroke-width="0.9" fill="none"/>
<path d="M126.0 39.5 L128.3 41.3 L129.7 43.0" stroke="#5e7f9a" stroke-opacity="0.33" stroke-width="0.8" fill="none"/>
<path d="M103.8 55.4 L107.8 57.4 L111.2 58.7 L113.8 58.9" stroke="#3f4a45" stroke-opacity="0.19" stroke-width="0.6" fill="none"/>
<path d="M75.4 31.7 L77.4 32.7 L79.2 33.2 L82.2 35.3 L84.3 36.8" stroke="#56665c" stroke-opacity="0.34" stroke-width="0.6" fill="none"/>
<path d="M168.0 2.8 L170.0 2.8 L173.2 1.5 L175.7 1.2 L178.6 -0.8 L179.9 -1.7" stroke="#4f4a5a" stroke-opacity="0.33" stroke-width="0.9" fill="none"/>
<path d="M96.0 49.9 L98.3 49.4 L102.7 48.5" stroke="#56665c" stroke-opacity="0.36" stroke-width="0.9" fill="none"/>
<path d="M87.5 33.7 L89.6 32.4 L90.9 31.5 L92.9 30.8 L96.0 30.0" stroke="#4f4a5a" stroke-opacity="0.19" stroke-width="0.7" fill="none"/>
<path d="M167.0 5.4 L170.2 5.7 L171.8 5.5 L175.1 4.5 L178.1 3.9 L179.8 2.7" stroke="#56665c" stroke-opacity="0.36" stroke-width="0.8" fill="none"/>
<path d="M-6.2 44.1 L-2.2 43.1 L0.5 41.3 L1.9 40.4 L5.7 39.5 L9.0 37.6" stroke="#5e7f9a" stroke-opacity="0.23" stroke-width="0.6" fill="none"/>
<path d="M3.6 33.6 L7.4 34.9 L9.9 36.0 L11.2 37.2" stroke="#56665c" stroke-opacity="0.30" stroke-width="0.9" fill="none"/>
<path d="M224.7 3.7 L226.3 4.2 L227.8 5.6 L230.5 6.0" stroke="#5e7f9a" stroke-opacity="0.19" stroke-width="0.8" fill="none"/>
<path d="M119.0 -2.0 L121.1 -3.1 L123.1 -4.0 L126.5 -6.2 L129.3 -7.6 L132.5 -9.7" stroke="#666666" stroke-opacity="0.35" stroke-width="0.8" fill="none"/>
<path d="M200.8 34.6 L204.3 34.2 L206.0 33.2 L209.5 30.8 L210.7 30.0" stroke="#4f4a5a" stroke-opacity="0.28" stroke-width="0.9" fill="none"/>
<path d="M80.2 42.0 L84.1 40.2 L85.7 40.1 L89.8 39.3 L92.3 38.3 L94.9 36.5" stroke="#4f4a5a" stroke-opacity="0.25" stroke-width="0.6" fill="none"/>
<path d="M151.3 14.2 L155.0 15.2 L158.7 17.0 L161.7 17.6" stroke="#5e7f9a" stroke-opacity="0.30" stroke-width="0.6" fill="none"/>
<path d="M23.7 38.4 L27.1 39.9 L28.9 40.3 L31.4 42.0" stroke="#666666" stroke-opacity="0.35" stroke-width="0.6" fill="none"/>
<path d="M153.2 53.7 L156.6 54.7 L158.5 55.2" stroke="#3f4a45" stroke-opacity="0.16" stroke-width="0.6" fill="none"/>
<path d="M-6.1 3.0 L-2.0 3.6 L2.1 2.7 L3.5 2.1 L4.9 1.1 L7.7 -0.8" stroke="#3f4a45" stroke-opacity="0.13" stroke-width="0.8" fill="none"/>
<path d="M157.9 39.0 L161.4 41.8 L164.6 44.0" stroke="#56665c" stroke-opacity="0.25" stroke-width="0.6" fill="none"/>
<path d="M192.7 12.0 L195.7 13.8 L198.5 15.5" stroke="#4f4a5a" stroke-opacity="0.21" stroke-width="0.9" fill="none"/>
<path d="M84.2 7.8 L87.9 7.8 L90.0 8.7 L92.1 10.3" stroke="#4f4a5a" stroke-opacity="0.14" stroke-width="0.9" fill="none"/>
<path d="M228.5 34.4 L231.9 32.8 L236.0 32.2 L238.0 31.6 L241.3 29.8 L243.9 29.0" stroke="#666666" stroke-opacity="0.30" stroke-width="0.9" fill="none"/>
<path d="M219.6 27.7 L221.8 28.4 L225.6 30.0 L228.2 30.3" stroke="#3f4a45" stroke-opacity="0.24" stroke-width="0.9" fill="none"/>
<path d="M138.3 5.8 L140.4 6.9 L141.7 8.3" stroke="#666666" stroke-opacity="0.26" stroke-width="0.7" fill="none"/>
<path d="M165.2 48.5 L168.2 50.4 L169.9 52.6" stroke="#5e7f9a" stroke-opacity="0.17" stroke-width="0.6" fill="none"/>
<path d="M29.0 48.3 L33.1 48.2 L35.1 47.9 L37.8 46.2 L40.2 44.6" stroke="#666666" stroke-opacity="0.17" stroke-width="0.9" fill="none"/>
<path d="M199.2 62.4 L203.2 63.5 L204.9 64.2 L208.7 65.6" stroke="#56665c" stroke-opacity="0.27" stroke-width="0.7" fill="none"/>
<path d="M224.9 48.4 L226.6 48.4 L230.1 49.2" stroke="#4f4a5a" stroke-opacity="0.18" stroke-width="0.6" fill="none"/>
<path d="M5.0 21.5 L6.7 21.5 L8.4 21.0 L10.6 20.3" stroke="#56665c" stroke-opacity="0.34" stroke-width="0.7" fill="none"/>
<path d="M82.9 8.8 L86.4 10.8 L90.2 11.1" stroke="#5e7f9a" stroke-opacity="0.29" stroke-width="0.6" fill="none"/>
<path d="M238.9 45.6 L243.2 44.8 L245.5 44.0 L249.1 41.5 L251.4 40.0 L254.6 37.8" stroke="#5e7f9a" stroke-opacity="0.19" stroke-width="0.9" fill="none"/>
<path d="M216.4 6.9 L219.3 7.1 L221.5 7.5" stroke="#666666" stroke-opacity="0.24" stroke-width="0.6" fill="none"/>
<path d="M10.0 34.4 L13.2 33.4 L17.2 32.9" stroke="#5e7f9a" stroke-opacity="0.32" stroke-width="0.8" fill="none"/>
<path d="M98.5 17.7 L101.6 19.3 L102.8 20.3 L104.8 21.7" stroke="#666666" stroke-opacity="0.18" stroke-width="0.6" fill="none"/>
<path d="M22.0 15.6 L25.1 15.0 L26.9 15.3 L28.5 16.0 L29.5 17.3" stroke="#56665c" stroke-opacity="0.29" stroke-width="0.9" fill="none"/>
<path d="M149.2 11.6 L151.4 12.3 L153.1 14.4" stroke="#5e7f9a" stroke-opacity="0.34" stroke-width="0.9" fill="none"/>
<path d="M0 42 C20 46 40 50 60 52 S 90 56 110 60 S 150 66 170 70" stroke="#6f9cc4" stroke-opacity="0.4" stroke-width="1.5" fill="none"/>
<path d="M0 20 C15 18 30 14 45 12 S 70 9 85 7" stroke="#7aa6c8" stroke-opacity="0.45" stroke-width="1" fill="none"/>
<path d="M10 33 C30 31 50 26 70 24 S 100 22 125 26" stroke="#7aa6c8" stroke-opacity="0.4" stroke-width="0.9" fill="none"/></g>
<g transform="translate(-242,-113)">
 <path d="M301.5 154 L311.5 174" stroke="#1e1e1e" stroke-width="1.9"/>
 <path d="M276.5 128.5 L289.5 122.5 L301.8 144 L288.2 151 Z" fill="url(#body)"/>
 <path d="M270.8 126.8 Q270.8 124.6 273 123.6 L288.8 115 Q291.6 114.2 292 116.8 L291.2 122.2 Q290.8 124 288.6 124.8 L276.5 130.2 Q272 131.6 270.8 126.8 Z" fill="#e63a3a"/>
 <path d="M285 151 L308.3 143.4 Q311.6 142.6 312 145.8 L311.2 148.8 Q310.4 150.8 306 152.8 L290.5 159.4 Q286 161 285.4 157.4 Z" fill="#e03636"/>
 <ellipse cx="293" cy="154.6" rx="3.4" ry="2.4" fill="#f3d2d2" opacity="0.8"/>
</g>
</svg>
</div>
<div class="a" style="left:524px;top:124px;width:26px;height:43px;background:#fff"></div>
<svg class="a" style="left:520px;top:118px" width="55" height="52">
<defs><clipPath id="cg"><rect x="30" y="0" width="25" height="52"/></clipPath></defs>
<rect x="29.5" y="8.5" width="18" height="38" fill="none" stroke="#fff" stroke-opacity="0.85" stroke-width="1"/>
<g clip-path="url(#cg)" fill="none" stroke="#fff">
 <circle cx="30.5" cy="27" r="13.3" stroke-width="1.2"/>
 <path d="M30.5 40.6 A13.6 13.6 0 0 0 43.5 31" stroke-width="2.6"/>
 <ellipse cx="30.5" cy="27" rx="6" ry="13" stroke-width="1.2" transform="rotate(-20 30.5 27)"/>
 <path d="M18 21 Q31 15 43 22" stroke-width="1"/>
 <path d="M18 30 Q31 25 44 31" stroke-width="1"/>
 <path d="M22 37 Q31 33 40 36" stroke-width="1"/>
</g>
</svg>

<div class="a" style="left:446.42px;top:128.60px;font-size:26.38px;line-height:32px;transform:scaleX(0.929);color:#fff;-webkit-text-stroke:0.6px #33913f">Spatial</div>
<div class="a" style="left:570.61px;top:128.30px;font-size:26.38px;line-height:32px;transform:scaleX(0.989);color:#fff;-webkit-text-stroke:0.6px #33913f">Manager</div>
<div class="a" style="left:572.60px;top:153.70px;font-size:11.88px;line-height:14px;transform:scaleX(0.875);color:#fff;-webkit-text-stroke:0.3px #33913f">for AutoCAD</div>
<div class="a" style="left:631px;top:154px;font-size:5px;line-height:6px;color:#fff">&#174;</div>
<div class="a" style="left:0;top:0;font-size:19.26px;line-height:23px;color:#33913f;-webkit-text-stroke:0.45px #33913f;will-change:transform;transform:translate(522.80px,162.58px) rotate(-90deg) scaleX(0.998)">spm</div>
<div class="gb" style="left:252px;top:189px;width:421px;height:41px"></div>
<div class="a" style="left:258px;top:185px;width:75px;height:8px;background:#f0f0f0"></div>
<div class="a" style="left:260.92px;top:182.75px;font-size:11.43px;line-height:14px;transform:scaleX(0.992);font-weight:bold">1 - Load data</div>
<div class="btn" style="left:276px;top:202px;width:69px;height:20px"></div>
<div class="a" style="left:286.69px;top:204.90px;font-size:11.30px;line-height:14px;transform:scaleX(0.892)">Load data</div>
<div class="a" style="left:352.58px;top:205.50px;font-size:11.30px;line-height:14px;transform:scaleX(0.913)">16 lines have been read</div>
<div class="gb" style="left:254px;top:243px;width:419px;height:268px"></div>
<div class="a" style="left:258px;top:239px;width:154px;height:8px;background:#f0f0f0"></div>
<div class="a" style="left:262.16px;top:236.00px;font-size:11.43px;line-height:14px;transform:scaleX(0.991);font-weight:bold">2 - Select fields to Geocode</div>
<div class="a" style="left:274.10px;top:258.50px;font-size:11.30px;line-height:14px;transform:scaleX(0.939)">Available fields</div>
<div class="lb" style="left:275px;top:279px;width:140px;height:186px"></div>
<div class="a" style="left:277px;top:281px;width:136px;height:12px;background:#0078d7"></div>
<div class="a" style="left:278.54px;top:279.30px;font-size:11.30px;line-height:14px;transform:scaleX(0.809);color:#fff">City</div>
<div class="a" style="left:514.02px;top:258.60px;font-size:11.30px;line-height:14px;transform:scaleX(0.923)">Used fields</div>
<div class="lb" style="left:515px;top:279px;width:140px;height:186px"></div>
<div class="a" style="left:518.42px;top:279.60px;font-size:11.30px;line-height:14px;transform:scaleX(0.841)">Street</div>
<div class="a" style="left:517.89px;top:291.80px;font-size:11.30px;line-height:14px;transform:scaleX(1.009)">N</div>
<div class="a" style="left:490px;top:280px;width:18px;height:18px;background:#d9d9d9;border:1px solid #d0d0d0"></div>
<svg class="a" style="left:490px;top:280px" width="18" height="18"><path d="M2.2 12.5L8.9 3.6L15.8 12.5Z" fill="#5c5c5c"/></svg>
<div class="a" style="left:490px;top:301px;width:18px;height:19px;background:#d9d9d9;border:1px solid #d0d0d0"></div>
<svg class="a" style="left:490px;top:301px" width="18" height="19"><path d="M2.2 5.9L15.8 5.9L8.9 15.2Z" fill="#5c5c5c"/></svg>
<div class="btn" style="left:432px;top:340px;width:68px;height:19px"></div>
<div class="a" style="left:458.43px;top:343.50px;font-size:9.86px;line-height:12px;transform:scaleX(1.184)">--&gt;</div>
<div class="btn" style="left:432px;top:367px;width:68px;height:19px;background:#cccccc;border-color:#bfbfbf"></div>
<div class="a" style="left:459.04px;top:371.80px;font-size:9.86px;line-height:12px;transform:scaleX(1.174);color:#f6f6f6">&lt;--</div>
<div class="a" style="left:273.85px;top:466.60px;font-size:11.30px;line-height:14px;transform:scaleX(0.944)">First line example</div>
<div class="a" style="left:275px;top:484px;width:380px;height:19px;background:#ffffe1;border:1px solid #6e6e6e"></div>
<div class="a" style="left:276.50px;top:485.00px;font-size:11.30px;line-height:14px;transform:scaleX(0.882)">Placer Street 1500</div>
<div class="gb" style="left:254px;top:523px;width:419px;height:43px"></div>
<div class="a" style="left:258px;top:519px;width:170px;height:8px;background:#f0f0f0"></div>
<div class="a" style="left:262.28px;top:516.75px;font-size:11.43px;line-height:14px;transform:scaleX(0.984);font-weight:bold">3 - Select provider to Geogode</div>
<div class="btn" style="left:528px;top:573px;width:68px;height:20px"></div>
<div class="a" style="left:540.98px;top:574.80px;font-size:11.30px;line-height:14px;transform:scaleX(0.920)">Geocode</div>
<div class="btn" style="left:603px;top:573px;width:69px;height:20px"></div>
<div class="a" style="left:620.67px;top:574.80px;font-size:11.30px;line-height:14px;transform:scaleX(0.946)">Cancel</div>
<div class="a" style="left:275px;top:536px;width:140px;height:19px;background:#cce4f7;border:1px solid #0a62a8"></div>
<div class="a" style="left:278.31px;top:538.30px;font-size:11.30px;line-height:14px;transform:scaleX(0.870)">OSM</div>
<svg class="a" style="left:400px;top:542px" width="10" height="7"><path d="M1 1.5L5 5.5L9 1.5" fill="none" stroke="#333" stroke-width="1"/></svg>
<div class="a" style="left:277px;top:556px;width:140px;height:39px;background:rgba(0,0,0,0.13)"></div>
<div class="a" style="left:275px;top:554px;width:140px;height:39px;background:#fff;border:1px solid #0a6fc4"></div>
<div class="a" style="left:276px;top:568px;width:138px;height:12px;background:#0078d7"></div>
<div class="a" style="left:277.71px;top:554.70px;font-size:11.30px;line-height:14px;transform:scaleX(0.877)">Bing</div>
<div class="a" style="left:277.50px;top:567.00px;font-size:11.30px;line-height:14px;transform:scaleX(0.879);color:#fff">Google</div>
<div class="a" style="left:277.60px;top:578.80px;font-size:11.30px;line-height:14px;transform:scaleX(0.891)">OSM</div>
</body></html>
